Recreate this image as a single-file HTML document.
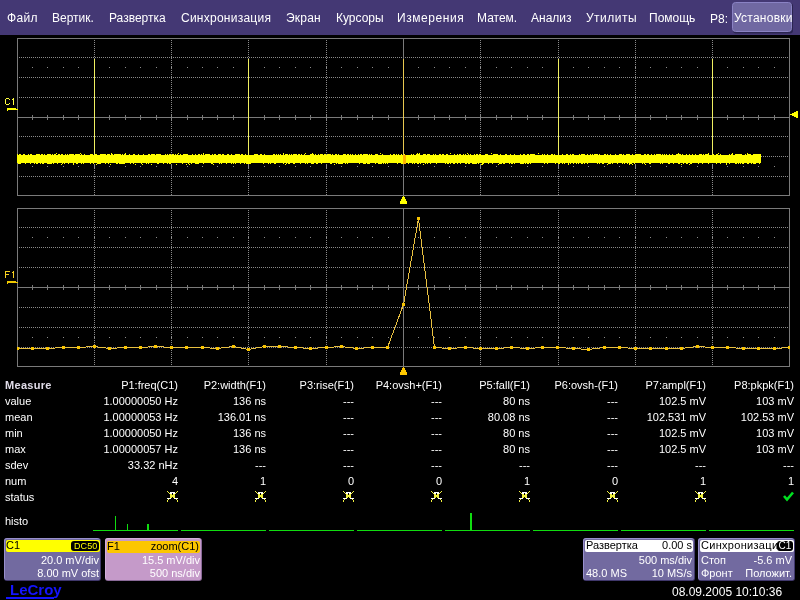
<!DOCTYPE html>
<html><head><meta charset="utf-8"><style>
html,body{margin:0;padding:0;background:#000;width:800px;height:600px;overflow:hidden}
svg{display:block;font-family:"Liberation Sans", sans-serif;will-change:transform}
</style></head><body>
<svg width="800" height="600" viewBox="0 0 800 600" shape-rendering="crispEdges">
<rect x="0" y="0" width="800" height="600" fill="#000"/>
<rect x="0" y="0" width="800" height="35" fill="#443874"/>
<text x="7" y="22" fill="#ffffff" font-size="12" text-anchor="start" font-weight="normal" letter-spacing="0.3">Файл</text>
<text x="52" y="22" fill="#ffffff" font-size="12" text-anchor="start" font-weight="normal">Вертик.</text>
<text x="109" y="22" fill="#ffffff" font-size="12" text-anchor="start" font-weight="normal">Развертка</text>
<text x="181" y="22" fill="#ffffff" font-size="12" text-anchor="start" font-weight="normal" letter-spacing="0.25">Синхронизация</text>
<text x="286" y="22" fill="#ffffff" font-size="12" text-anchor="start" font-weight="normal" letter-spacing="0.2">Экран</text>
<text x="336" y="22" fill="#ffffff" font-size="12" text-anchor="start" font-weight="normal">Курсоры</text>
<text x="397" y="22" fill="#ffffff" font-size="12" text-anchor="start" font-weight="normal" letter-spacing="0.55">Измерения</text>
<text x="477" y="22" fill="#ffffff" font-size="12" text-anchor="start" font-weight="normal">Матем.</text>
<text x="531" y="22" fill="#ffffff" font-size="12" text-anchor="start" font-weight="normal">Анализ</text>
<text x="586" y="22" fill="#ffffff" font-size="12" text-anchor="start" font-weight="normal" letter-spacing="0.5">Утилиты</text>
<text x="649" y="22" fill="#ffffff" font-size="12" text-anchor="start" font-weight="normal">Помощь</text>
<text x="710" y="23" fill="#ffffff" font-size="12" text-anchor="start" font-weight="normal">P8:</text>
<rect x="733" y="3" width="60" height="30.5" rx="3" fill="#2a2450" shape-rendering="auto"/>
<rect x="732.5" y="2.5" width="59" height="29" rx="3" fill="#7068a2" stroke="#8a82c4" stroke-width="1" shape-rendering="auto"/>
<text x="734" y="22" fill="#ffffff" font-size="12" text-anchor="start" font-weight="normal" letter-spacing="0.25">Установки</text>
<rect x="17" y="38" width="773" height="1" fill="#7a7a7a"/>
<rect x="17" y="195" width="773" height="1" fill="#7a7a7a"/>
<rect x="17" y="38" width="1" height="158" fill="#7a7a7a"/>
<rect x="789" y="38" width="1" height="158" fill="#7a7a7a"/>
<path d="M19 57.5H788" stroke="#8a8a8a" stroke-dasharray="1 1" />
<path d="M19 77.5H788" stroke="#8a8a8a" stroke-dasharray="1 1" />
<path d="M19 97.5H788" stroke="#8a8a8a" stroke-dasharray="1 1" />
<path d="M19 136.5H788" stroke="#8a8a8a" stroke-dasharray="1 1" />
<path d="M19 156.5H788" stroke="#8a8a8a" stroke-dasharray="1 1" />
<path d="M19 176.5H788" stroke="#8a8a8a" stroke-dasharray="1 1" />
<rect x="17" y="117" width="773" height="1" fill="#7a7a7a"/>
<rect x="94" y="115" width="1" height="5" fill="#7a7a7a"/>
<rect x="171" y="115" width="1" height="5" fill="#7a7a7a"/>
<rect x="248" y="115" width="1" height="5" fill="#7a7a7a"/>
<rect x="326" y="115" width="1" height="5" fill="#7a7a7a"/>
<rect x="403" y="115" width="1" height="5" fill="#7a7a7a"/>
<rect x="480" y="115" width="1" height="5" fill="#7a7a7a"/>
<rect x="558" y="115" width="1" height="5" fill="#7a7a7a"/>
<rect x="635" y="115" width="1" height="5" fill="#7a7a7a"/>
<rect x="712" y="115" width="1" height="5" fill="#7a7a7a"/>
<rect x="32" y="115" width="1" height="5" fill="#7a7a7a"/>
<rect x="47" y="115" width="1" height="5" fill="#7a7a7a"/>
<rect x="63" y="115" width="1" height="5" fill="#7a7a7a"/>
<rect x="78" y="115" width="1" height="5" fill="#7a7a7a"/>
<rect x="109" y="115" width="1" height="5" fill="#7a7a7a"/>
<rect x="125" y="115" width="1" height="5" fill="#7a7a7a"/>
<rect x="140" y="115" width="1" height="5" fill="#7a7a7a"/>
<rect x="156" y="115" width="1" height="5" fill="#7a7a7a"/>
<rect x="187" y="115" width="1" height="5" fill="#7a7a7a"/>
<rect x="202" y="115" width="1" height="5" fill="#7a7a7a"/>
<rect x="217" y="115" width="1" height="5" fill="#7a7a7a"/>
<rect x="233" y="115" width="1" height="5" fill="#7a7a7a"/>
<rect x="264" y="115" width="1" height="5" fill="#7a7a7a"/>
<rect x="279" y="115" width="1" height="5" fill="#7a7a7a"/>
<rect x="295" y="115" width="1" height="5" fill="#7a7a7a"/>
<rect x="310" y="115" width="1" height="5" fill="#7a7a7a"/>
<rect x="341" y="115" width="1" height="5" fill="#7a7a7a"/>
<rect x="357" y="115" width="1" height="5" fill="#7a7a7a"/>
<rect x="372" y="115" width="1" height="5" fill="#7a7a7a"/>
<rect x="388" y="115" width="1" height="5" fill="#7a7a7a"/>
<rect x="418" y="115" width="1" height="5" fill="#7a7a7a"/>
<rect x="434" y="115" width="1" height="5" fill="#7a7a7a"/>
<rect x="449" y="115" width="1" height="5" fill="#7a7a7a"/>
<rect x="465" y="115" width="1" height="5" fill="#7a7a7a"/>
<rect x="496" y="115" width="1" height="5" fill="#7a7a7a"/>
<rect x="511" y="115" width="1" height="5" fill="#7a7a7a"/>
<rect x="527" y="115" width="1" height="5" fill="#7a7a7a"/>
<rect x="542" y="115" width="1" height="5" fill="#7a7a7a"/>
<rect x="573" y="115" width="1" height="5" fill="#7a7a7a"/>
<rect x="588" y="115" width="1" height="5" fill="#7a7a7a"/>
<rect x="604" y="115" width="1" height="5" fill="#7a7a7a"/>
<rect x="619" y="115" width="1" height="5" fill="#7a7a7a"/>
<rect x="650" y="115" width="1" height="5" fill="#7a7a7a"/>
<rect x="666" y="115" width="1" height="5" fill="#7a7a7a"/>
<rect x="681" y="115" width="1" height="5" fill="#7a7a7a"/>
<rect x="697" y="115" width="1" height="5" fill="#7a7a7a"/>
<rect x="727" y="115" width="1" height="5" fill="#7a7a7a"/>
<rect x="743" y="115" width="1" height="5" fill="#7a7a7a"/>
<rect x="758" y="115" width="1" height="5" fill="#7a7a7a"/>
<rect x="774" y="115" width="1" height="5" fill="#7a7a7a"/>
<path d="M94.5 40V195" stroke="#8a8a8a" stroke-dasharray="1 1" />
<path d="M171.5 40V195" stroke="#8a8a8a" stroke-dasharray="1 1" />
<path d="M248.5 40V195" stroke="#8a8a8a" stroke-dasharray="1 1" />
<path d="M326.5 40V195" stroke="#8a8a8a" stroke-dasharray="1 1" />
<path d="M480.5 40V195" stroke="#8a8a8a" stroke-dasharray="1 1" />
<path d="M558.5 40V195" stroke="#8a8a8a" stroke-dasharray="1 1" />
<path d="M635.5 40V195" stroke="#8a8a8a" stroke-dasharray="1 1" />
<path d="M712.5 40V195" stroke="#8a8a8a" stroke-dasharray="1 1" />
<rect x="403" y="38" width="1" height="158" fill="#7a7a7a"/>
<rect x="32" y="67" width="1" height="1" fill="#8a8a8a"/>
<rect x="47" y="67" width="1" height="1" fill="#8a8a8a"/>
<rect x="63" y="67" width="1" height="1" fill="#8a8a8a"/>
<rect x="78" y="67" width="1" height="1" fill="#8a8a8a"/>
<rect x="109" y="67" width="1" height="1" fill="#8a8a8a"/>
<rect x="125" y="67" width="1" height="1" fill="#8a8a8a"/>
<rect x="140" y="67" width="1" height="1" fill="#8a8a8a"/>
<rect x="156" y="67" width="1" height="1" fill="#8a8a8a"/>
<rect x="187" y="67" width="1" height="1" fill="#8a8a8a"/>
<rect x="202" y="67" width="1" height="1" fill="#8a8a8a"/>
<rect x="217" y="67" width="1" height="1" fill="#8a8a8a"/>
<rect x="233" y="67" width="1" height="1" fill="#8a8a8a"/>
<rect x="264" y="67" width="1" height="1" fill="#8a8a8a"/>
<rect x="279" y="67" width="1" height="1" fill="#8a8a8a"/>
<rect x="295" y="67" width="1" height="1" fill="#8a8a8a"/>
<rect x="310" y="67" width="1" height="1" fill="#8a8a8a"/>
<rect x="341" y="67" width="1" height="1" fill="#8a8a8a"/>
<rect x="357" y="67" width="1" height="1" fill="#8a8a8a"/>
<rect x="372" y="67" width="1" height="1" fill="#8a8a8a"/>
<rect x="388" y="67" width="1" height="1" fill="#8a8a8a"/>
<rect x="418" y="67" width="1" height="1" fill="#8a8a8a"/>
<rect x="434" y="67" width="1" height="1" fill="#8a8a8a"/>
<rect x="449" y="67" width="1" height="1" fill="#8a8a8a"/>
<rect x="465" y="67" width="1" height="1" fill="#8a8a8a"/>
<rect x="496" y="67" width="1" height="1" fill="#8a8a8a"/>
<rect x="511" y="67" width="1" height="1" fill="#8a8a8a"/>
<rect x="527" y="67" width="1" height="1" fill="#8a8a8a"/>
<rect x="542" y="67" width="1" height="1" fill="#8a8a8a"/>
<rect x="573" y="67" width="1" height="1" fill="#8a8a8a"/>
<rect x="588" y="67" width="1" height="1" fill="#8a8a8a"/>
<rect x="604" y="67" width="1" height="1" fill="#8a8a8a"/>
<rect x="619" y="67" width="1" height="1" fill="#8a8a8a"/>
<rect x="650" y="67" width="1" height="1" fill="#8a8a8a"/>
<rect x="666" y="67" width="1" height="1" fill="#8a8a8a"/>
<rect x="681" y="67" width="1" height="1" fill="#8a8a8a"/>
<rect x="697" y="67" width="1" height="1" fill="#8a8a8a"/>
<rect x="727" y="67" width="1" height="1" fill="#8a8a8a"/>
<rect x="743" y="67" width="1" height="1" fill="#8a8a8a"/>
<rect x="758" y="67" width="1" height="1" fill="#8a8a8a"/>
<rect x="774" y="67" width="1" height="1" fill="#8a8a8a"/>
<rect x="94" y="66" width="1" height="3" fill="#8a8a8a"/>
<rect x="171" y="66" width="1" height="3" fill="#8a8a8a"/>
<rect x="248" y="66" width="1" height="3" fill="#8a8a8a"/>
<rect x="326" y="66" width="1" height="3" fill="#8a8a8a"/>
<rect x="480" y="66" width="1" height="3" fill="#8a8a8a"/>
<rect x="558" y="66" width="1" height="3" fill="#8a8a8a"/>
<rect x="635" y="66" width="1" height="3" fill="#8a8a8a"/>
<rect x="712" y="66" width="1" height="3" fill="#8a8a8a"/>
<rect x="32" y="166" width="1" height="1" fill="#8a8a8a"/>
<rect x="47" y="166" width="1" height="1" fill="#8a8a8a"/>
<rect x="63" y="166" width="1" height="1" fill="#8a8a8a"/>
<rect x="78" y="166" width="1" height="1" fill="#8a8a8a"/>
<rect x="109" y="166" width="1" height="1" fill="#8a8a8a"/>
<rect x="125" y="166" width="1" height="1" fill="#8a8a8a"/>
<rect x="140" y="166" width="1" height="1" fill="#8a8a8a"/>
<rect x="156" y="166" width="1" height="1" fill="#8a8a8a"/>
<rect x="187" y="166" width="1" height="1" fill="#8a8a8a"/>
<rect x="202" y="166" width="1" height="1" fill="#8a8a8a"/>
<rect x="217" y="166" width="1" height="1" fill="#8a8a8a"/>
<rect x="233" y="166" width="1" height="1" fill="#8a8a8a"/>
<rect x="264" y="166" width="1" height="1" fill="#8a8a8a"/>
<rect x="279" y="166" width="1" height="1" fill="#8a8a8a"/>
<rect x="295" y="166" width="1" height="1" fill="#8a8a8a"/>
<rect x="310" y="166" width="1" height="1" fill="#8a8a8a"/>
<rect x="341" y="166" width="1" height="1" fill="#8a8a8a"/>
<rect x="357" y="166" width="1" height="1" fill="#8a8a8a"/>
<rect x="372" y="166" width="1" height="1" fill="#8a8a8a"/>
<rect x="388" y="166" width="1" height="1" fill="#8a8a8a"/>
<rect x="418" y="166" width="1" height="1" fill="#8a8a8a"/>
<rect x="434" y="166" width="1" height="1" fill="#8a8a8a"/>
<rect x="449" y="166" width="1" height="1" fill="#8a8a8a"/>
<rect x="465" y="166" width="1" height="1" fill="#8a8a8a"/>
<rect x="496" y="166" width="1" height="1" fill="#8a8a8a"/>
<rect x="511" y="166" width="1" height="1" fill="#8a8a8a"/>
<rect x="527" y="166" width="1" height="1" fill="#8a8a8a"/>
<rect x="542" y="166" width="1" height="1" fill="#8a8a8a"/>
<rect x="573" y="166" width="1" height="1" fill="#8a8a8a"/>
<rect x="588" y="166" width="1" height="1" fill="#8a8a8a"/>
<rect x="604" y="166" width="1" height="1" fill="#8a8a8a"/>
<rect x="619" y="166" width="1" height="1" fill="#8a8a8a"/>
<rect x="650" y="166" width="1" height="1" fill="#8a8a8a"/>
<rect x="666" y="166" width="1" height="1" fill="#8a8a8a"/>
<rect x="681" y="166" width="1" height="1" fill="#8a8a8a"/>
<rect x="697" y="166" width="1" height="1" fill="#8a8a8a"/>
<rect x="727" y="166" width="1" height="1" fill="#8a8a8a"/>
<rect x="743" y="166" width="1" height="1" fill="#8a8a8a"/>
<rect x="758" y="166" width="1" height="1" fill="#8a8a8a"/>
<rect x="774" y="166" width="1" height="1" fill="#8a8a8a"/>
<rect x="94" y="165" width="1" height="3" fill="#8a8a8a"/>
<rect x="171" y="165" width="1" height="3" fill="#8a8a8a"/>
<rect x="248" y="165" width="1" height="3" fill="#8a8a8a"/>
<rect x="326" y="165" width="1" height="3" fill="#8a8a8a"/>
<rect x="480" y="165" width="1" height="3" fill="#8a8a8a"/>
<rect x="558" y="165" width="1" height="3" fill="#8a8a8a"/>
<rect x="635" y="165" width="1" height="3" fill="#8a8a8a"/>
<rect x="712" y="165" width="1" height="3" fill="#8a8a8a"/>
<rect x="17" y="208" width="773" height="1" fill="#7a7a7a"/>
<rect x="17" y="366" width="773" height="1" fill="#7a7a7a"/>
<rect x="17" y="208" width="1" height="159" fill="#7a7a7a"/>
<rect x="789" y="208" width="1" height="159" fill="#7a7a7a"/>
<path d="M19 227.5H788" stroke="#8a8a8a" stroke-dasharray="1 1" />
<path d="M19 247.5H788" stroke="#8a8a8a" stroke-dasharray="1 1" />
<path d="M19 267.5H788" stroke="#8a8a8a" stroke-dasharray="1 1" />
<path d="M19 307.5H788" stroke="#8a8a8a" stroke-dasharray="1 1" />
<path d="M19 327.5H788" stroke="#8a8a8a" stroke-dasharray="1 1" />
<path d="M19 347.5H788" stroke="#8a8a8a" stroke-dasharray="1 1" />
<rect x="17" y="287" width="773" height="1" fill="#7a7a7a"/>
<rect x="94" y="285" width="1" height="5" fill="#7a7a7a"/>
<rect x="171" y="285" width="1" height="5" fill="#7a7a7a"/>
<rect x="248" y="285" width="1" height="5" fill="#7a7a7a"/>
<rect x="326" y="285" width="1" height="5" fill="#7a7a7a"/>
<rect x="403" y="285" width="1" height="5" fill="#7a7a7a"/>
<rect x="480" y="285" width="1" height="5" fill="#7a7a7a"/>
<rect x="558" y="285" width="1" height="5" fill="#7a7a7a"/>
<rect x="635" y="285" width="1" height="5" fill="#7a7a7a"/>
<rect x="712" y="285" width="1" height="5" fill="#7a7a7a"/>
<rect x="32" y="285" width="1" height="5" fill="#7a7a7a"/>
<rect x="47" y="285" width="1" height="5" fill="#7a7a7a"/>
<rect x="63" y="285" width="1" height="5" fill="#7a7a7a"/>
<rect x="78" y="285" width="1" height="5" fill="#7a7a7a"/>
<rect x="109" y="285" width="1" height="5" fill="#7a7a7a"/>
<rect x="125" y="285" width="1" height="5" fill="#7a7a7a"/>
<rect x="140" y="285" width="1" height="5" fill="#7a7a7a"/>
<rect x="156" y="285" width="1" height="5" fill="#7a7a7a"/>
<rect x="187" y="285" width="1" height="5" fill="#7a7a7a"/>
<rect x="202" y="285" width="1" height="5" fill="#7a7a7a"/>
<rect x="217" y="285" width="1" height="5" fill="#7a7a7a"/>
<rect x="233" y="285" width="1" height="5" fill="#7a7a7a"/>
<rect x="264" y="285" width="1" height="5" fill="#7a7a7a"/>
<rect x="279" y="285" width="1" height="5" fill="#7a7a7a"/>
<rect x="295" y="285" width="1" height="5" fill="#7a7a7a"/>
<rect x="310" y="285" width="1" height="5" fill="#7a7a7a"/>
<rect x="341" y="285" width="1" height="5" fill="#7a7a7a"/>
<rect x="357" y="285" width="1" height="5" fill="#7a7a7a"/>
<rect x="372" y="285" width="1" height="5" fill="#7a7a7a"/>
<rect x="388" y="285" width="1" height="5" fill="#7a7a7a"/>
<rect x="418" y="285" width="1" height="5" fill="#7a7a7a"/>
<rect x="434" y="285" width="1" height="5" fill="#7a7a7a"/>
<rect x="449" y="285" width="1" height="5" fill="#7a7a7a"/>
<rect x="465" y="285" width="1" height="5" fill="#7a7a7a"/>
<rect x="496" y="285" width="1" height="5" fill="#7a7a7a"/>
<rect x="511" y="285" width="1" height="5" fill="#7a7a7a"/>
<rect x="527" y="285" width="1" height="5" fill="#7a7a7a"/>
<rect x="542" y="285" width="1" height="5" fill="#7a7a7a"/>
<rect x="573" y="285" width="1" height="5" fill="#7a7a7a"/>
<rect x="588" y="285" width="1" height="5" fill="#7a7a7a"/>
<rect x="604" y="285" width="1" height="5" fill="#7a7a7a"/>
<rect x="619" y="285" width="1" height="5" fill="#7a7a7a"/>
<rect x="650" y="285" width="1" height="5" fill="#7a7a7a"/>
<rect x="666" y="285" width="1" height="5" fill="#7a7a7a"/>
<rect x="681" y="285" width="1" height="5" fill="#7a7a7a"/>
<rect x="697" y="285" width="1" height="5" fill="#7a7a7a"/>
<rect x="727" y="285" width="1" height="5" fill="#7a7a7a"/>
<rect x="743" y="285" width="1" height="5" fill="#7a7a7a"/>
<rect x="758" y="285" width="1" height="5" fill="#7a7a7a"/>
<rect x="774" y="285" width="1" height="5" fill="#7a7a7a"/>
<path d="M94.5 210V366" stroke="#8a8a8a" stroke-dasharray="1 1" />
<path d="M171.5 210V366" stroke="#8a8a8a" stroke-dasharray="1 1" />
<path d="M248.5 210V366" stroke="#8a8a8a" stroke-dasharray="1 1" />
<path d="M326.5 210V366" stroke="#8a8a8a" stroke-dasharray="1 1" />
<path d="M480.5 210V366" stroke="#8a8a8a" stroke-dasharray="1 1" />
<path d="M558.5 210V366" stroke="#8a8a8a" stroke-dasharray="1 1" />
<path d="M635.5 210V366" stroke="#8a8a8a" stroke-dasharray="1 1" />
<path d="M712.5 210V366" stroke="#8a8a8a" stroke-dasharray="1 1" />
<rect x="403" y="208" width="1" height="159" fill="#7a7a7a"/>
<rect x="32" y="237" width="1" height="1" fill="#8a8a8a"/>
<rect x="47" y="237" width="1" height="1" fill="#8a8a8a"/>
<rect x="63" y="237" width="1" height="1" fill="#8a8a8a"/>
<rect x="78" y="237" width="1" height="1" fill="#8a8a8a"/>
<rect x="109" y="237" width="1" height="1" fill="#8a8a8a"/>
<rect x="125" y="237" width="1" height="1" fill="#8a8a8a"/>
<rect x="140" y="237" width="1" height="1" fill="#8a8a8a"/>
<rect x="156" y="237" width="1" height="1" fill="#8a8a8a"/>
<rect x="187" y="237" width="1" height="1" fill="#8a8a8a"/>
<rect x="202" y="237" width="1" height="1" fill="#8a8a8a"/>
<rect x="217" y="237" width="1" height="1" fill="#8a8a8a"/>
<rect x="233" y="237" width="1" height="1" fill="#8a8a8a"/>
<rect x="264" y="237" width="1" height="1" fill="#8a8a8a"/>
<rect x="279" y="237" width="1" height="1" fill="#8a8a8a"/>
<rect x="295" y="237" width="1" height="1" fill="#8a8a8a"/>
<rect x="310" y="237" width="1" height="1" fill="#8a8a8a"/>
<rect x="341" y="237" width="1" height="1" fill="#8a8a8a"/>
<rect x="357" y="237" width="1" height="1" fill="#8a8a8a"/>
<rect x="372" y="237" width="1" height="1" fill="#8a8a8a"/>
<rect x="388" y="237" width="1" height="1" fill="#8a8a8a"/>
<rect x="418" y="237" width="1" height="1" fill="#8a8a8a"/>
<rect x="434" y="237" width="1" height="1" fill="#8a8a8a"/>
<rect x="449" y="237" width="1" height="1" fill="#8a8a8a"/>
<rect x="465" y="237" width="1" height="1" fill="#8a8a8a"/>
<rect x="496" y="237" width="1" height="1" fill="#8a8a8a"/>
<rect x="511" y="237" width="1" height="1" fill="#8a8a8a"/>
<rect x="527" y="237" width="1" height="1" fill="#8a8a8a"/>
<rect x="542" y="237" width="1" height="1" fill="#8a8a8a"/>
<rect x="573" y="237" width="1" height="1" fill="#8a8a8a"/>
<rect x="588" y="237" width="1" height="1" fill="#8a8a8a"/>
<rect x="604" y="237" width="1" height="1" fill="#8a8a8a"/>
<rect x="619" y="237" width="1" height="1" fill="#8a8a8a"/>
<rect x="650" y="237" width="1" height="1" fill="#8a8a8a"/>
<rect x="666" y="237" width="1" height="1" fill="#8a8a8a"/>
<rect x="681" y="237" width="1" height="1" fill="#8a8a8a"/>
<rect x="697" y="237" width="1" height="1" fill="#8a8a8a"/>
<rect x="727" y="237" width="1" height="1" fill="#8a8a8a"/>
<rect x="743" y="237" width="1" height="1" fill="#8a8a8a"/>
<rect x="758" y="237" width="1" height="1" fill="#8a8a8a"/>
<rect x="774" y="237" width="1" height="1" fill="#8a8a8a"/>
<rect x="94" y="236" width="1" height="3" fill="#8a8a8a"/>
<rect x="171" y="236" width="1" height="3" fill="#8a8a8a"/>
<rect x="248" y="236" width="1" height="3" fill="#8a8a8a"/>
<rect x="326" y="236" width="1" height="3" fill="#8a8a8a"/>
<rect x="480" y="236" width="1" height="3" fill="#8a8a8a"/>
<rect x="558" y="236" width="1" height="3" fill="#8a8a8a"/>
<rect x="635" y="236" width="1" height="3" fill="#8a8a8a"/>
<rect x="712" y="236" width="1" height="3" fill="#8a8a8a"/>
<rect x="32" y="337" width="1" height="1" fill="#8a8a8a"/>
<rect x="47" y="337" width="1" height="1" fill="#8a8a8a"/>
<rect x="63" y="337" width="1" height="1" fill="#8a8a8a"/>
<rect x="78" y="337" width="1" height="1" fill="#8a8a8a"/>
<rect x="109" y="337" width="1" height="1" fill="#8a8a8a"/>
<rect x="125" y="337" width="1" height="1" fill="#8a8a8a"/>
<rect x="140" y="337" width="1" height="1" fill="#8a8a8a"/>
<rect x="156" y="337" width="1" height="1" fill="#8a8a8a"/>
<rect x="187" y="337" width="1" height="1" fill="#8a8a8a"/>
<rect x="202" y="337" width="1" height="1" fill="#8a8a8a"/>
<rect x="217" y="337" width="1" height="1" fill="#8a8a8a"/>
<rect x="233" y="337" width="1" height="1" fill="#8a8a8a"/>
<rect x="264" y="337" width="1" height="1" fill="#8a8a8a"/>
<rect x="279" y="337" width="1" height="1" fill="#8a8a8a"/>
<rect x="295" y="337" width="1" height="1" fill="#8a8a8a"/>
<rect x="310" y="337" width="1" height="1" fill="#8a8a8a"/>
<rect x="341" y="337" width="1" height="1" fill="#8a8a8a"/>
<rect x="357" y="337" width="1" height="1" fill="#8a8a8a"/>
<rect x="372" y="337" width="1" height="1" fill="#8a8a8a"/>
<rect x="388" y="337" width="1" height="1" fill="#8a8a8a"/>
<rect x="418" y="337" width="1" height="1" fill="#8a8a8a"/>
<rect x="434" y="337" width="1" height="1" fill="#8a8a8a"/>
<rect x="449" y="337" width="1" height="1" fill="#8a8a8a"/>
<rect x="465" y="337" width="1" height="1" fill="#8a8a8a"/>
<rect x="496" y="337" width="1" height="1" fill="#8a8a8a"/>
<rect x="511" y="337" width="1" height="1" fill="#8a8a8a"/>
<rect x="527" y="337" width="1" height="1" fill="#8a8a8a"/>
<rect x="542" y="337" width="1" height="1" fill="#8a8a8a"/>
<rect x="573" y="337" width="1" height="1" fill="#8a8a8a"/>
<rect x="588" y="337" width="1" height="1" fill="#8a8a8a"/>
<rect x="604" y="337" width="1" height="1" fill="#8a8a8a"/>
<rect x="619" y="337" width="1" height="1" fill="#8a8a8a"/>
<rect x="650" y="337" width="1" height="1" fill="#8a8a8a"/>
<rect x="666" y="337" width="1" height="1" fill="#8a8a8a"/>
<rect x="681" y="337" width="1" height="1" fill="#8a8a8a"/>
<rect x="697" y="337" width="1" height="1" fill="#8a8a8a"/>
<rect x="727" y="337" width="1" height="1" fill="#8a8a8a"/>
<rect x="743" y="337" width="1" height="1" fill="#8a8a8a"/>
<rect x="758" y="337" width="1" height="1" fill="#8a8a8a"/>
<rect x="774" y="337" width="1" height="1" fill="#8a8a8a"/>
<rect x="94" y="336" width="1" height="3" fill="#8a8a8a"/>
<rect x="171" y="336" width="1" height="3" fill="#8a8a8a"/>
<rect x="248" y="336" width="1" height="3" fill="#8a8a8a"/>
<rect x="326" y="336" width="1" height="3" fill="#8a8a8a"/>
<rect x="480" y="336" width="1" height="3" fill="#8a8a8a"/>
<rect x="558" y="336" width="1" height="3" fill="#8a8a8a"/>
<rect x="635" y="336" width="1" height="3" fill="#8a8a8a"/>
<rect x="712" y="336" width="1" height="3" fill="#8a8a8a"/>
<rect x="6" y="98" width="3" height="1" fill="#ffff40"/>
<rect x="5" y="99" width="1" height="5" fill="#ffff40"/>
<rect x="6" y="104" width="3" height="1" fill="#ffff40"/>
<rect x="9" y="99" width="1" height="1" fill="#ffff40"/>
<rect x="9" y="103" width="1" height="1" fill="#ffff40"/>
<rect x="13" y="98" width="1" height="7" fill="#ffff40"/>
<rect x="12" y="99" width="1" height="1" fill="#ffff40"/>
<rect x="7" y="108" width="9" height="1" fill="#ffff00"/>
<rect x="7" y="109" width="11" height="1" fill="#ffff00"/>
<rect x="7" y="110" width="1" height="1" fill="#ffff00"/>
<rect x="5" y="271" width="1" height="7" fill="#f8d020"/>
<rect x="6" y="271" width="4" height="1" fill="#f8d020"/>
<rect x="6" y="274" width="3" height="1" fill="#f8d020"/>
<rect x="13" y="271" width="1" height="7" fill="#f8d020"/>
<rect x="12" y="272" width="1" height="1" fill="#f8d020"/>
<rect x="7" y="281" width="9" height="1" fill="#f0c800"/>
<rect x="7" y="282" width="11" height="1" fill="#f0c800"/>
<rect x="7" y="283" width="1" height="1" fill="#f0c800"/>
<rect x="17" y="155" width="744" height="8" fill="#ffff00"/>
<rect x="17" y="154" width="1" height="1" fill="#ffff00"/>
<rect x="18" y="163" width="1" height="1" fill="#ffff00"/>
<rect x="19" y="154" width="1" height="1" fill="#ffff00"/>
<rect x="19" y="163" width="1" height="1" fill="#ffff00"/>
<rect x="20" y="154" width="1" height="1" fill="#ffff00"/>
<rect x="20" y="163" width="1" height="1" fill="#ffff00"/>
<rect x="23" y="154" width="1" height="1" fill="#ffff00"/>
<rect x="24" y="154" width="1" height="1" fill="#ffff00"/>
<rect x="25" y="163" width="1" height="1" fill="#ffff00"/>
<rect x="28" y="154" width="1" height="1" fill="#ffff00"/>
<rect x="30" y="154" width="1" height="1" fill="#ffff00"/>
<rect x="30" y="163" width="1" height="1" fill="#ffff00"/>
<rect x="31" y="154" width="1" height="1" fill="#ffff00"/>
<rect x="34" y="163" width="1" height="1" fill="#ffff00"/>
<rect x="36" y="154" width="1" height="1" fill="#ffff00"/>
<rect x="36" y="163" width="1" height="1" fill="#ffff00"/>
<rect x="37" y="154" width="1" height="1" fill="#ffff00"/>
<rect x="37" y="163" width="1" height="1" fill="#ffff00"/>
<rect x="38" y="154" width="1" height="1" fill="#ffff00"/>
<rect x="39" y="154" width="1" height="1" fill="#ffff00"/>
<rect x="40" y="163" width="1" height="1" fill="#ffff00"/>
<rect x="41" y="154" width="1" height="1" fill="#ffff00"/>
<rect x="42" y="154" width="1" height="1" fill="#ffff00"/>
<rect x="42" y="163" width="1" height="1" fill="#ffff00"/>
<rect x="43" y="163" width="1" height="1" fill="#ffff00"/>
<rect x="44" y="154" width="1" height="1" fill="#ffff00"/>
<rect x="47" y="154" width="1" height="1" fill="#ffff00"/>
<rect x="47" y="163" width="1" height="1" fill="#ffff00"/>
<rect x="48" y="154" width="1" height="1" fill="#ffff00"/>
<rect x="48" y="163" width="1" height="1" fill="#ffff00"/>
<rect x="49" y="154" width="1" height="1" fill="#ffff00"/>
<rect x="49" y="163" width="1" height="1" fill="#ffff00"/>
<rect x="50" y="154" width="1" height="1" fill="#ffff00"/>
<rect x="50" y="163" width="1" height="1" fill="#ffff00"/>
<rect x="51" y="163" width="1" height="1" fill="#ffff00"/>
<rect x="52" y="154" width="1" height="1" fill="#ffff00"/>
<rect x="53" y="163" width="1" height="1" fill="#ffff00"/>
<rect x="54" y="154" width="1" height="1" fill="#ffff00"/>
<rect x="55" y="154" width="1" height="1" fill="#ffff00"/>
<rect x="56" y="153" width="1" height="1" fill="#ffff00"/>
<rect x="57" y="163" width="1" height="1" fill="#ffff00"/>
<rect x="58" y="154" width="1" height="1" fill="#ffff00"/>
<rect x="59" y="154" width="1" height="1" fill="#ffff00"/>
<rect x="61" y="154" width="1" height="1" fill="#ffff00"/>
<rect x="61" y="164" width="1" height="1" fill="#ffff00"/>
<rect x="62" y="154" width="1" height="1" fill="#ffff00"/>
<rect x="62" y="163" width="1" height="1" fill="#ffff00"/>
<rect x="64" y="163" width="1" height="1" fill="#ffff00"/>
<rect x="65" y="154" width="1" height="1" fill="#ffff00"/>
<rect x="67" y="154" width="1" height="1" fill="#ffff00"/>
<rect x="68" y="163" width="1" height="1" fill="#ffff00"/>
<rect x="69" y="154" width="1" height="1" fill="#ffff00"/>
<rect x="70" y="154" width="1" height="1" fill="#ffff00"/>
<rect x="71" y="154" width="1" height="1" fill="#ffff00"/>
<rect x="72" y="154" width="1" height="1" fill="#ffff00"/>
<rect x="73" y="154" width="1" height="1" fill="#ffff00"/>
<rect x="73" y="163" width="1" height="1" fill="#ffff00"/>
<rect x="73" y="164" width="1" height="1" fill="#ffff00"/>
<rect x="75" y="154" width="1" height="1" fill="#ffff00"/>
<rect x="76" y="154" width="1" height="1" fill="#ffff00"/>
<rect x="76" y="163" width="1" height="1" fill="#ffff00"/>
<rect x="77" y="154" width="1" height="1" fill="#ffff00"/>
<rect x="77" y="163" width="1" height="1" fill="#ffff00"/>
<rect x="78" y="154" width="1" height="1" fill="#ffff00"/>
<rect x="79" y="154" width="1" height="1" fill="#ffff00"/>
<rect x="80" y="153" width="1" height="1" fill="#ffff00"/>
<rect x="81" y="154" width="1" height="1" fill="#ffff00"/>
<rect x="81" y="163" width="1" height="1" fill="#ffff00"/>
<rect x="83" y="163" width="1" height="1" fill="#ffff00"/>
<rect x="84" y="154" width="1" height="1" fill="#ffff00"/>
<rect x="90" y="154" width="1" height="1" fill="#ffff00"/>
<rect x="90" y="163" width="1" height="1" fill="#ffff00"/>
<rect x="91" y="154" width="1" height="1" fill="#ffff00"/>
<rect x="92" y="154" width="1" height="1" fill="#ffff00"/>
<rect x="93" y="163" width="1" height="1" fill="#ffff00"/>
<rect x="94" y="154" width="1" height="1" fill="#ffff00"/>
<rect x="95" y="154" width="1" height="1" fill="#ffff00"/>
<rect x="96" y="154" width="1" height="1" fill="#ffff00"/>
<rect x="96" y="164" width="1" height="1" fill="#ffff00"/>
<rect x="97" y="163" width="1" height="1" fill="#ffff00"/>
<rect x="98" y="163" width="1" height="1" fill="#ffff00"/>
<rect x="99" y="163" width="1" height="1" fill="#ffff00"/>
<rect x="100" y="154" width="1" height="1" fill="#ffff00"/>
<rect x="100" y="163" width="1" height="1" fill="#ffff00"/>
<rect x="101" y="154" width="1" height="1" fill="#ffff00"/>
<rect x="102" y="154" width="1" height="1" fill="#ffff00"/>
<rect x="103" y="154" width="1" height="1" fill="#ffff00"/>
<rect x="104" y="154" width="1" height="1" fill="#ffff00"/>
<rect x="105" y="154" width="1" height="1" fill="#ffff00"/>
<rect x="105" y="163" width="1" height="1" fill="#ffff00"/>
<rect x="107" y="154" width="1" height="1" fill="#ffff00"/>
<rect x="108" y="154" width="1" height="1" fill="#ffff00"/>
<rect x="108" y="163" width="1" height="1" fill="#ffff00"/>
<rect x="109" y="154" width="1" height="1" fill="#ffff00"/>
<rect x="110" y="164" width="1" height="1" fill="#ffff00"/>
<rect x="111" y="154" width="1" height="1" fill="#ffff00"/>
<rect x="111" y="153" width="1" height="1" fill="#ffff00"/>
<rect x="112" y="154" width="1" height="1" fill="#ffff00"/>
<rect x="114" y="154" width="1" height="1" fill="#ffff00"/>
<rect x="115" y="154" width="1" height="1" fill="#ffff00"/>
<rect x="116" y="154" width="1" height="1" fill="#ffff00"/>
<rect x="116" y="163" width="1" height="1" fill="#ffff00"/>
<rect x="117" y="154" width="1" height="1" fill="#ffff00"/>
<rect x="117" y="163" width="1" height="1" fill="#ffff00"/>
<rect x="118" y="154" width="1" height="1" fill="#ffff00"/>
<rect x="119" y="154" width="1" height="1" fill="#ffff00"/>
<rect x="119" y="163" width="1" height="1" fill="#ffff00"/>
<rect x="120" y="154" width="1" height="1" fill="#ffff00"/>
<rect x="120" y="163" width="1" height="1" fill="#ffff00"/>
<rect x="121" y="163" width="1" height="1" fill="#ffff00"/>
<rect x="122" y="154" width="1" height="1" fill="#ffff00"/>
<rect x="122" y="163" width="1" height="1" fill="#ffff00"/>
<rect x="123" y="163" width="1" height="1" fill="#ffff00"/>
<rect x="124" y="154" width="1" height="1" fill="#ffff00"/>
<rect x="124" y="163" width="1" height="1" fill="#ffff00"/>
<rect x="125" y="154" width="1" height="1" fill="#ffff00"/>
<rect x="125" y="153" width="1" height="1" fill="#ffff00"/>
<rect x="129" y="154" width="1" height="1" fill="#ffff00"/>
<rect x="130" y="163" width="1" height="1" fill="#ffff00"/>
<rect x="133" y="154" width="1" height="1" fill="#ffff00"/>
<rect x="133" y="163" width="1" height="1" fill="#ffff00"/>
<rect x="134" y="154" width="1" height="1" fill="#ffff00"/>
<rect x="135" y="164" width="1" height="1" fill="#ffff00"/>
<rect x="138" y="154" width="1" height="1" fill="#ffff00"/>
<rect x="141" y="163" width="1" height="1" fill="#ffff00"/>
<rect x="142" y="164" width="1" height="1" fill="#ffff00"/>
<rect x="143" y="154" width="1" height="1" fill="#ffff00"/>
<rect x="146" y="163" width="1" height="1" fill="#ffff00"/>
<rect x="148" y="154" width="1" height="1" fill="#ffff00"/>
<rect x="148" y="163" width="1" height="1" fill="#ffff00"/>
<rect x="149" y="154" width="1" height="1" fill="#ffff00"/>
<rect x="151" y="154" width="1" height="1" fill="#ffff00"/>
<rect x="151" y="164" width="1" height="1" fill="#ffff00"/>
<rect x="152" y="154" width="1" height="1" fill="#ffff00"/>
<rect x="153" y="154" width="1" height="1" fill="#ffff00"/>
<rect x="154" y="154" width="1" height="1" fill="#ffff00"/>
<rect x="156" y="154" width="1" height="1" fill="#ffff00"/>
<rect x="157" y="154" width="1" height="1" fill="#ffff00"/>
<rect x="157" y="163" width="1" height="1" fill="#ffff00"/>
<rect x="158" y="154" width="1" height="1" fill="#ffff00"/>
<rect x="158" y="163" width="1" height="1" fill="#ffff00"/>
<rect x="159" y="154" width="1" height="1" fill="#ffff00"/>
<rect x="160" y="154" width="1" height="1" fill="#ffff00"/>
<rect x="163" y="163" width="1" height="1" fill="#ffff00"/>
<rect x="165" y="154" width="1" height="1" fill="#ffff00"/>
<rect x="167" y="154" width="1" height="1" fill="#ffff00"/>
<rect x="167" y="163" width="1" height="1" fill="#ffff00"/>
<rect x="169" y="154" width="1" height="1" fill="#ffff00"/>
<rect x="169" y="163" width="1" height="1" fill="#ffff00"/>
<rect x="170" y="154" width="1" height="1" fill="#ffff00"/>
<rect x="170" y="163" width="1" height="1" fill="#ffff00"/>
<rect x="172" y="154" width="1" height="1" fill="#ffff00"/>
<rect x="173" y="154" width="1" height="1" fill="#ffff00"/>
<rect x="175" y="154" width="1" height="1" fill="#ffff00"/>
<rect x="176" y="164" width="1" height="1" fill="#ffff00"/>
<rect x="177" y="154" width="1" height="1" fill="#ffff00"/>
<rect x="178" y="153" width="1" height="1" fill="#ffff00"/>
<rect x="180" y="154" width="1" height="1" fill="#ffff00"/>
<rect x="182" y="163" width="1" height="1" fill="#ffff00"/>
<rect x="183" y="154" width="1" height="1" fill="#ffff00"/>
<rect x="184" y="154" width="1" height="1" fill="#ffff00"/>
<rect x="185" y="154" width="1" height="1" fill="#ffff00"/>
<rect x="186" y="154" width="1" height="1" fill="#ffff00"/>
<rect x="186" y="164" width="1" height="1" fill="#ffff00"/>
<rect x="187" y="154" width="1" height="1" fill="#ffff00"/>
<rect x="188" y="163" width="1" height="1" fill="#ffff00"/>
<rect x="189" y="164" width="1" height="1" fill="#ffff00"/>
<rect x="191" y="163" width="1" height="1" fill="#ffff00"/>
<rect x="192" y="154" width="1" height="1" fill="#ffff00"/>
<rect x="195" y="154" width="1" height="1" fill="#ffff00"/>
<rect x="195" y="163" width="1" height="1" fill="#ffff00"/>
<rect x="196" y="163" width="1" height="1" fill="#ffff00"/>
<rect x="197" y="163" width="1" height="1" fill="#ffff00"/>
<rect x="198" y="154" width="1" height="1" fill="#ffff00"/>
<rect x="198" y="163" width="1" height="1" fill="#ffff00"/>
<rect x="199" y="154" width="1" height="1" fill="#ffff00"/>
<rect x="201" y="154" width="1" height="1" fill="#ffff00"/>
<rect x="203" y="154" width="1" height="1" fill="#ffff00"/>
<rect x="203" y="153" width="1" height="1" fill="#ffff00"/>
<rect x="203" y="163" width="1" height="1" fill="#ffff00"/>
<rect x="205" y="154" width="1" height="1" fill="#ffff00"/>
<rect x="206" y="154" width="1" height="1" fill="#ffff00"/>
<rect x="207" y="154" width="1" height="1" fill="#ffff00"/>
<rect x="208" y="154" width="1" height="1" fill="#ffff00"/>
<rect x="209" y="154" width="1" height="1" fill="#ffff00"/>
<rect x="211" y="163" width="1" height="1" fill="#ffff00"/>
<rect x="212" y="154" width="1" height="1" fill="#ffff00"/>
<rect x="212" y="163" width="1" height="1" fill="#ffff00"/>
<rect x="213" y="164" width="1" height="1" fill="#ffff00"/>
<rect x="214" y="154" width="1" height="1" fill="#ffff00"/>
<rect x="215" y="154" width="1" height="1" fill="#ffff00"/>
<rect x="218" y="154" width="1" height="1" fill="#ffff00"/>
<rect x="219" y="154" width="1" height="1" fill="#ffff00"/>
<rect x="219" y="163" width="1" height="1" fill="#ffff00"/>
<rect x="220" y="154" width="1" height="1" fill="#ffff00"/>
<rect x="221" y="163" width="1" height="1" fill="#ffff00"/>
<rect x="222" y="154" width="1" height="1" fill="#ffff00"/>
<rect x="223" y="154" width="1" height="1" fill="#ffff00"/>
<rect x="226" y="163" width="1" height="1" fill="#ffff00"/>
<rect x="227" y="154" width="1" height="1" fill="#ffff00"/>
<rect x="228" y="154" width="1" height="1" fill="#ffff00"/>
<rect x="231" y="154" width="1" height="1" fill="#ffff00"/>
<rect x="231" y="163" width="1" height="1" fill="#ffff00"/>
<rect x="233" y="163" width="1" height="1" fill="#ffff00"/>
<rect x="235" y="154" width="1" height="1" fill="#ffff00"/>
<rect x="235" y="163" width="1" height="1" fill="#ffff00"/>
<rect x="236" y="154" width="1" height="1" fill="#ffff00"/>
<rect x="237" y="154" width="1" height="1" fill="#ffff00"/>
<rect x="238" y="154" width="1" height="1" fill="#ffff00"/>
<rect x="239" y="154" width="1" height="1" fill="#ffff00"/>
<rect x="240" y="163" width="1" height="1" fill="#ffff00"/>
<rect x="241" y="154" width="1" height="1" fill="#ffff00"/>
<rect x="242" y="154" width="1" height="1" fill="#ffff00"/>
<rect x="244" y="163" width="1" height="1" fill="#ffff00"/>
<rect x="245" y="154" width="1" height="1" fill="#ffff00"/>
<rect x="246" y="163" width="1" height="1" fill="#ffff00"/>
<rect x="247" y="163" width="1" height="1" fill="#ffff00"/>
<rect x="248" y="154" width="1" height="1" fill="#ffff00"/>
<rect x="248" y="163" width="1" height="1" fill="#ffff00"/>
<rect x="249" y="163" width="1" height="1" fill="#ffff00"/>
<rect x="250" y="163" width="1" height="1" fill="#ffff00"/>
<rect x="254" y="154" width="1" height="1" fill="#ffff00"/>
<rect x="255" y="154" width="1" height="1" fill="#ffff00"/>
<rect x="256" y="154" width="1" height="1" fill="#ffff00"/>
<rect x="257" y="154" width="1" height="1" fill="#ffff00"/>
<rect x="260" y="154" width="1" height="1" fill="#ffff00"/>
<rect x="261" y="154" width="1" height="1" fill="#ffff00"/>
<rect x="263" y="163" width="1" height="1" fill="#ffff00"/>
<rect x="264" y="154" width="1" height="1" fill="#ffff00"/>
<rect x="268" y="163" width="1" height="1" fill="#ffff00"/>
<rect x="270" y="163" width="1" height="1" fill="#ffff00"/>
<rect x="273" y="154" width="1" height="1" fill="#ffff00"/>
<rect x="274" y="154" width="1" height="1" fill="#ffff00"/>
<rect x="274" y="163" width="1" height="1" fill="#ffff00"/>
<rect x="275" y="163" width="1" height="1" fill="#ffff00"/>
<rect x="276" y="154" width="1" height="1" fill="#ffff00"/>
<rect x="278" y="154" width="1" height="1" fill="#ffff00"/>
<rect x="280" y="154" width="1" height="1" fill="#ffff00"/>
<rect x="283" y="154" width="1" height="1" fill="#ffff00"/>
<rect x="283" y="153" width="1" height="1" fill="#ffff00"/>
<rect x="283" y="163" width="1" height="1" fill="#ffff00"/>
<rect x="285" y="154" width="1" height="1" fill="#ffff00"/>
<rect x="285" y="164" width="1" height="1" fill="#ffff00"/>
<rect x="286" y="154" width="1" height="1" fill="#ffff00"/>
<rect x="286" y="163" width="1" height="1" fill="#ffff00"/>
<rect x="287" y="154" width="1" height="1" fill="#ffff00"/>
<rect x="288" y="163" width="1" height="1" fill="#ffff00"/>
<rect x="289" y="154" width="1" height="1" fill="#ffff00"/>
<rect x="289" y="163" width="1" height="1" fill="#ffff00"/>
<rect x="291" y="154" width="1" height="1" fill="#ffff00"/>
<rect x="293" y="154" width="1" height="1" fill="#ffff00"/>
<rect x="293" y="163" width="1" height="1" fill="#ffff00"/>
<rect x="294" y="154" width="1" height="1" fill="#ffff00"/>
<rect x="294" y="163" width="1" height="1" fill="#ffff00"/>
<rect x="295" y="154" width="1" height="1" fill="#ffff00"/>
<rect x="296" y="154" width="1" height="1" fill="#ffff00"/>
<rect x="298" y="154" width="1" height="1" fill="#ffff00"/>
<rect x="299" y="154" width="1" height="1" fill="#ffff00"/>
<rect x="300" y="163" width="1" height="1" fill="#ffff00"/>
<rect x="301" y="154" width="1" height="1" fill="#ffff00"/>
<rect x="304" y="154" width="1" height="1" fill="#ffff00"/>
<rect x="305" y="153" width="1" height="1" fill="#ffff00"/>
<rect x="305" y="163" width="1" height="1" fill="#ffff00"/>
<rect x="307" y="163" width="1" height="1" fill="#ffff00"/>
<rect x="310" y="154" width="1" height="1" fill="#ffff00"/>
<rect x="311" y="154" width="1" height="1" fill="#ffff00"/>
<rect x="311" y="163" width="1" height="1" fill="#ffff00"/>
<rect x="312" y="154" width="1" height="1" fill="#ffff00"/>
<rect x="312" y="153" width="1" height="1" fill="#ffff00"/>
<rect x="312" y="163" width="1" height="1" fill="#ffff00"/>
<rect x="313" y="154" width="1" height="1" fill="#ffff00"/>
<rect x="313" y="163" width="1" height="1" fill="#ffff00"/>
<rect x="315" y="154" width="1" height="1" fill="#ffff00"/>
<rect x="316" y="163" width="1" height="1" fill="#ffff00"/>
<rect x="317" y="163" width="1" height="1" fill="#ffff00"/>
<rect x="318" y="154" width="1" height="1" fill="#ffff00"/>
<rect x="320" y="154" width="1" height="1" fill="#ffff00"/>
<rect x="321" y="154" width="1" height="1" fill="#ffff00"/>
<rect x="321" y="163" width="1" height="1" fill="#ffff00"/>
<rect x="322" y="154" width="1" height="1" fill="#ffff00"/>
<rect x="324" y="154" width="1" height="1" fill="#ffff00"/>
<rect x="325" y="154" width="1" height="1" fill="#ffff00"/>
<rect x="327" y="154" width="1" height="1" fill="#ffff00"/>
<rect x="328" y="154" width="1" height="1" fill="#ffff00"/>
<rect x="329" y="154" width="1" height="1" fill="#ffff00"/>
<rect x="330" y="154" width="1" height="1" fill="#ffff00"/>
<rect x="330" y="163" width="1" height="1" fill="#ffff00"/>
<rect x="331" y="163" width="1" height="1" fill="#ffff00"/>
<rect x="332" y="154" width="1" height="1" fill="#ffff00"/>
<rect x="334" y="164" width="1" height="1" fill="#ffff00"/>
<rect x="335" y="154" width="1" height="1" fill="#ffff00"/>
<rect x="336" y="154" width="1" height="1" fill="#ffff00"/>
<rect x="336" y="163" width="1" height="1" fill="#ffff00"/>
<rect x="338" y="154" width="1" height="1" fill="#ffff00"/>
<rect x="338" y="163" width="1" height="1" fill="#ffff00"/>
<rect x="339" y="163" width="1" height="1" fill="#ffff00"/>
<rect x="340" y="163" width="1" height="1" fill="#ffff00"/>
<rect x="341" y="163" width="1" height="1" fill="#ffff00"/>
<rect x="342" y="163" width="1" height="1" fill="#ffff00"/>
<rect x="343" y="154" width="1" height="1" fill="#ffff00"/>
<rect x="344" y="154" width="1" height="1" fill="#ffff00"/>
<rect x="345" y="154" width="1" height="1" fill="#ffff00"/>
<rect x="345" y="163" width="1" height="1" fill="#ffff00"/>
<rect x="347" y="154" width="1" height="1" fill="#ffff00"/>
<rect x="347" y="163" width="1" height="1" fill="#ffff00"/>
<rect x="348" y="154" width="1" height="1" fill="#ffff00"/>
<rect x="350" y="154" width="1" height="1" fill="#ffff00"/>
<rect x="352" y="154" width="1" height="1" fill="#ffff00"/>
<rect x="355" y="154" width="1" height="1" fill="#ffff00"/>
<rect x="358" y="154" width="1" height="1" fill="#ffff00"/>
<rect x="359" y="163" width="1" height="1" fill="#ffff00"/>
<rect x="360" y="154" width="1" height="1" fill="#ffff00"/>
<rect x="361" y="154" width="1" height="1" fill="#ffff00"/>
<rect x="363" y="154" width="1" height="1" fill="#ffff00"/>
<rect x="363" y="163" width="1" height="1" fill="#ffff00"/>
<rect x="364" y="154" width="1" height="1" fill="#ffff00"/>
<rect x="364" y="163" width="1" height="1" fill="#ffff00"/>
<rect x="365" y="154" width="1" height="1" fill="#ffff00"/>
<rect x="365" y="163" width="1" height="1" fill="#ffff00"/>
<rect x="366" y="154" width="1" height="1" fill="#ffff00"/>
<rect x="367" y="154" width="1" height="1" fill="#ffff00"/>
<rect x="367" y="163" width="1" height="1" fill="#ffff00"/>
<rect x="368" y="163" width="1" height="1" fill="#ffff00"/>
<rect x="369" y="154" width="1" height="1" fill="#ffff00"/>
<rect x="369" y="163" width="1" height="1" fill="#ffff00"/>
<rect x="371" y="154" width="1" height="1" fill="#ffff00"/>
<rect x="375" y="154" width="1" height="1" fill="#ffff00"/>
<rect x="375" y="163" width="1" height="1" fill="#ffff00"/>
<rect x="376" y="154" width="1" height="1" fill="#ffff00"/>
<rect x="377" y="154" width="1" height="1" fill="#ffff00"/>
<rect x="378" y="163" width="1" height="1" fill="#ffff00"/>
<rect x="379" y="163" width="1" height="1" fill="#ffff00"/>
<rect x="380" y="153" width="1" height="1" fill="#ffff00"/>
<rect x="380" y="163" width="1" height="1" fill="#ffff00"/>
<rect x="381" y="163" width="1" height="1" fill="#ffff00"/>
<rect x="382" y="154" width="1" height="1" fill="#ffff00"/>
<rect x="383" y="163" width="1" height="1" fill="#ffff00"/>
<rect x="385" y="163" width="1" height="1" fill="#ffff00"/>
<rect x="387" y="163" width="1" height="1" fill="#ffff00"/>
<rect x="390" y="154" width="1" height="1" fill="#ffff00"/>
<rect x="393" y="154" width="1" height="1" fill="#ffff00"/>
<rect x="394" y="154" width="1" height="1" fill="#ffff00"/>
<rect x="396" y="154" width="1" height="1" fill="#ffff00"/>
<rect x="397" y="163" width="1" height="1" fill="#ffff00"/>
<rect x="398" y="154" width="1" height="1" fill="#ffff00"/>
<rect x="401" y="154" width="1" height="1" fill="#ffff00"/>
<rect x="401" y="163" width="1" height="1" fill="#ffff00"/>
<rect x="402" y="163" width="1" height="1" fill="#ffff00"/>
<rect x="403" y="163" width="1" height="1" fill="#ffff00"/>
<rect x="404" y="154" width="1" height="1" fill="#ffff00"/>
<rect x="408" y="163" width="1" height="1" fill="#ffff00"/>
<rect x="411" y="154" width="1" height="1" fill="#ffff00"/>
<rect x="412" y="163" width="1" height="1" fill="#ffff00"/>
<rect x="413" y="154" width="1" height="1" fill="#ffff00"/>
<rect x="414" y="163" width="1" height="1" fill="#ffff00"/>
<rect x="416" y="154" width="1" height="1" fill="#ffff00"/>
<rect x="417" y="154" width="1" height="1" fill="#ffff00"/>
<rect x="417" y="153" width="1" height="1" fill="#ffff00"/>
<rect x="417" y="163" width="1" height="1" fill="#ffff00"/>
<rect x="418" y="154" width="1" height="1" fill="#ffff00"/>
<rect x="418" y="163" width="1" height="1" fill="#ffff00"/>
<rect x="419" y="154" width="1" height="1" fill="#ffff00"/>
<rect x="419" y="153" width="1" height="1" fill="#ffff00"/>
<rect x="420" y="163" width="1" height="1" fill="#ffff00"/>
<rect x="423" y="154" width="1" height="1" fill="#ffff00"/>
<rect x="423" y="164" width="1" height="1" fill="#ffff00"/>
<rect x="424" y="154" width="1" height="1" fill="#ffff00"/>
<rect x="425" y="154" width="1" height="1" fill="#ffff00"/>
<rect x="425" y="163" width="1" height="1" fill="#ffff00"/>
<rect x="427" y="154" width="1" height="1" fill="#ffff00"/>
<rect x="427" y="163" width="1" height="1" fill="#ffff00"/>
<rect x="428" y="154" width="1" height="1" fill="#ffff00"/>
<rect x="429" y="154" width="1" height="1" fill="#ffff00"/>
<rect x="430" y="163" width="1" height="1" fill="#ffff00"/>
<rect x="433" y="154" width="1" height="1" fill="#ffff00"/>
<rect x="435" y="154" width="1" height="1" fill="#ffff00"/>
<rect x="436" y="163" width="1" height="1" fill="#ffff00"/>
<rect x="439" y="154" width="1" height="1" fill="#ffff00"/>
<rect x="440" y="154" width="1" height="1" fill="#ffff00"/>
<rect x="442" y="154" width="1" height="1" fill="#ffff00"/>
<rect x="443" y="154" width="1" height="1" fill="#ffff00"/>
<rect x="445" y="163" width="1" height="1" fill="#ffff00"/>
<rect x="446" y="154" width="1" height="1" fill="#ffff00"/>
<rect x="447" y="154" width="1" height="1" fill="#ffff00"/>
<rect x="447" y="163" width="1" height="1" fill="#ffff00"/>
<rect x="448" y="163" width="1" height="1" fill="#ffff00"/>
<rect x="450" y="153" width="1" height="1" fill="#ffff00"/>
<rect x="450" y="163" width="1" height="1" fill="#ffff00"/>
<rect x="453" y="163" width="1" height="1" fill="#ffff00"/>
<rect x="454" y="154" width="1" height="1" fill="#ffff00"/>
<rect x="454" y="163" width="1" height="1" fill="#ffff00"/>
<rect x="457" y="154" width="1" height="1" fill="#ffff00"/>
<rect x="457" y="163" width="1" height="1" fill="#ffff00"/>
<rect x="459" y="154" width="1" height="1" fill="#ffff00"/>
<rect x="460" y="154" width="1" height="1" fill="#ffff00"/>
<rect x="460" y="163" width="1" height="1" fill="#ffff00"/>
<rect x="463" y="154" width="1" height="1" fill="#ffff00"/>
<rect x="465" y="154" width="1" height="1" fill="#ffff00"/>
<rect x="465" y="163" width="1" height="1" fill="#ffff00"/>
<rect x="466" y="163" width="1" height="1" fill="#ffff00"/>
<rect x="467" y="153" width="1" height="1" fill="#ffff00"/>
<rect x="468" y="154" width="1" height="1" fill="#ffff00"/>
<rect x="468" y="163" width="1" height="1" fill="#ffff00"/>
<rect x="469" y="163" width="1" height="1" fill="#ffff00"/>
<rect x="470" y="154" width="1" height="1" fill="#ffff00"/>
<rect x="472" y="163" width="1" height="1" fill="#ffff00"/>
<rect x="473" y="163" width="1" height="1" fill="#ffff00"/>
<rect x="474" y="154" width="1" height="1" fill="#ffff00"/>
<rect x="474" y="163" width="1" height="1" fill="#ffff00"/>
<rect x="475" y="163" width="1" height="1" fill="#ffff00"/>
<rect x="476" y="154" width="1" height="1" fill="#ffff00"/>
<rect x="476" y="163" width="1" height="1" fill="#ffff00"/>
<rect x="477" y="154" width="1" height="1" fill="#ffff00"/>
<rect x="478" y="163" width="1" height="1" fill="#ffff00"/>
<rect x="479" y="154" width="1" height="1" fill="#ffff00"/>
<rect x="480" y="154" width="1" height="1" fill="#ffff00"/>
<rect x="481" y="164" width="1" height="1" fill="#ffff00"/>
<rect x="482" y="163" width="1" height="1" fill="#ffff00"/>
<rect x="482" y="164" width="1" height="1" fill="#ffff00"/>
<rect x="483" y="163" width="1" height="1" fill="#ffff00"/>
<rect x="485" y="154" width="1" height="1" fill="#ffff00"/>
<rect x="486" y="154" width="1" height="1" fill="#ffff00"/>
<rect x="487" y="154" width="1" height="1" fill="#ffff00"/>
<rect x="488" y="163" width="1" height="1" fill="#ffff00"/>
<rect x="491" y="153" width="1" height="1" fill="#ffff00"/>
<rect x="492" y="163" width="1" height="1" fill="#ffff00"/>
<rect x="493" y="154" width="1" height="1" fill="#ffff00"/>
<rect x="494" y="154" width="1" height="1" fill="#ffff00"/>
<rect x="495" y="154" width="1" height="1" fill="#ffff00"/>
<rect x="496" y="154" width="1" height="1" fill="#ffff00"/>
<rect x="497" y="154" width="1" height="1" fill="#ffff00"/>
<rect x="498" y="164" width="1" height="1" fill="#ffff00"/>
<rect x="499" y="163" width="1" height="1" fill="#ffff00"/>
<rect x="500" y="154" width="1" height="1" fill="#ffff00"/>
<rect x="500" y="163" width="1" height="1" fill="#ffff00"/>
<rect x="501" y="163" width="1" height="1" fill="#ffff00"/>
<rect x="503" y="163" width="1" height="1" fill="#ffff00"/>
<rect x="504" y="163" width="1" height="1" fill="#ffff00"/>
<rect x="505" y="154" width="1" height="1" fill="#ffff00"/>
<rect x="506" y="154" width="1" height="1" fill="#ffff00"/>
<rect x="509" y="163" width="1" height="1" fill="#ffff00"/>
<rect x="510" y="154" width="1" height="1" fill="#ffff00"/>
<rect x="511" y="163" width="1" height="1" fill="#ffff00"/>
<rect x="512" y="163" width="1" height="1" fill="#ffff00"/>
<rect x="514" y="154" width="1" height="1" fill="#ffff00"/>
<rect x="514" y="163" width="1" height="1" fill="#ffff00"/>
<rect x="520" y="154" width="1" height="1" fill="#ffff00"/>
<rect x="520" y="163" width="1" height="1" fill="#ffff00"/>
<rect x="521" y="163" width="1" height="1" fill="#ffff00"/>
<rect x="522" y="163" width="1" height="1" fill="#ffff00"/>
<rect x="523" y="154" width="1" height="1" fill="#ffff00"/>
<rect x="523" y="163" width="1" height="1" fill="#ffff00"/>
<rect x="524" y="154" width="1" height="1" fill="#ffff00"/>
<rect x="525" y="163" width="1" height="1" fill="#ffff00"/>
<rect x="527" y="154" width="1" height="1" fill="#ffff00"/>
<rect x="527" y="163" width="1" height="1" fill="#ffff00"/>
<rect x="528" y="154" width="1" height="1" fill="#ffff00"/>
<rect x="528" y="163" width="1" height="1" fill="#ffff00"/>
<rect x="530" y="154" width="1" height="1" fill="#ffff00"/>
<rect x="530" y="163" width="1" height="1" fill="#ffff00"/>
<rect x="531" y="154" width="1" height="1" fill="#ffff00"/>
<rect x="532" y="154" width="1" height="1" fill="#ffff00"/>
<rect x="533" y="154" width="1" height="1" fill="#ffff00"/>
<rect x="534" y="154" width="1" height="1" fill="#ffff00"/>
<rect x="538" y="153" width="1" height="1" fill="#ffff00"/>
<rect x="542" y="154" width="1" height="1" fill="#ffff00"/>
<rect x="544" y="154" width="1" height="1" fill="#ffff00"/>
<rect x="544" y="163" width="1" height="1" fill="#ffff00"/>
<rect x="547" y="154" width="1" height="1" fill="#ffff00"/>
<rect x="547" y="163" width="1" height="1" fill="#ffff00"/>
<rect x="551" y="154" width="1" height="1" fill="#ffff00"/>
<rect x="552" y="154" width="1" height="1" fill="#ffff00"/>
<rect x="554" y="154" width="1" height="1" fill="#ffff00"/>
<rect x="555" y="163" width="1" height="1" fill="#ffff00"/>
<rect x="558" y="163" width="1" height="1" fill="#ffff00"/>
<rect x="559" y="163" width="1" height="1" fill="#ffff00"/>
<rect x="562" y="154" width="1" height="1" fill="#ffff00"/>
<rect x="562" y="163" width="1" height="1" fill="#ffff00"/>
<rect x="564" y="163" width="1" height="1" fill="#ffff00"/>
<rect x="566" y="154" width="1" height="1" fill="#ffff00"/>
<rect x="567" y="154" width="1" height="1" fill="#ffff00"/>
<rect x="568" y="163" width="1" height="1" fill="#ffff00"/>
<rect x="568" y="164" width="1" height="1" fill="#ffff00"/>
<rect x="570" y="154" width="1" height="1" fill="#ffff00"/>
<rect x="570" y="163" width="1" height="1" fill="#ffff00"/>
<rect x="572" y="154" width="1" height="1" fill="#ffff00"/>
<rect x="573" y="154" width="1" height="1" fill="#ffff00"/>
<rect x="573" y="163" width="1" height="1" fill="#ffff00"/>
<rect x="576" y="163" width="1" height="1" fill="#ffff00"/>
<rect x="578" y="163" width="1" height="1" fill="#ffff00"/>
<rect x="579" y="154" width="1" height="1" fill="#ffff00"/>
<rect x="581" y="154" width="1" height="1" fill="#ffff00"/>
<rect x="581" y="163" width="1" height="1" fill="#ffff00"/>
<rect x="582" y="154" width="1" height="1" fill="#ffff00"/>
<rect x="582" y="163" width="1" height="1" fill="#ffff00"/>
<rect x="583" y="154" width="1" height="1" fill="#ffff00"/>
<rect x="584" y="154" width="1" height="1" fill="#ffff00"/>
<rect x="584" y="163" width="1" height="1" fill="#ffff00"/>
<rect x="587" y="154" width="1" height="1" fill="#ffff00"/>
<rect x="587" y="163" width="1" height="1" fill="#ffff00"/>
<rect x="590" y="154" width="1" height="1" fill="#ffff00"/>
<rect x="592" y="154" width="1" height="1" fill="#ffff00"/>
<rect x="594" y="154" width="1" height="1" fill="#ffff00"/>
<rect x="595" y="154" width="1" height="1" fill="#ffff00"/>
<rect x="596" y="154" width="1" height="1" fill="#ffff00"/>
<rect x="597" y="154" width="1" height="1" fill="#ffff00"/>
<rect x="597" y="163" width="1" height="1" fill="#ffff00"/>
<rect x="599" y="154" width="1" height="1" fill="#ffff00"/>
<rect x="599" y="163" width="1" height="1" fill="#ffff00"/>
<rect x="602" y="163" width="1" height="1" fill="#ffff00"/>
<rect x="603" y="163" width="1" height="1" fill="#ffff00"/>
<rect x="604" y="154" width="1" height="1" fill="#ffff00"/>
<rect x="605" y="154" width="1" height="1" fill="#ffff00"/>
<rect x="607" y="154" width="1" height="1" fill="#ffff00"/>
<rect x="607" y="164" width="1" height="1" fill="#ffff00"/>
<rect x="608" y="163" width="1" height="1" fill="#ffff00"/>
<rect x="609" y="163" width="1" height="1" fill="#ffff00"/>
<rect x="610" y="154" width="1" height="1" fill="#ffff00"/>
<rect x="610" y="163" width="1" height="1" fill="#ffff00"/>
<rect x="612" y="163" width="1" height="1" fill="#ffff00"/>
<rect x="615" y="154" width="1" height="1" fill="#ffff00"/>
<rect x="617" y="163" width="1" height="1" fill="#ffff00"/>
<rect x="619" y="154" width="1" height="1" fill="#ffff00"/>
<rect x="620" y="154" width="1" height="1" fill="#ffff00"/>
<rect x="621" y="154" width="1" height="1" fill="#ffff00"/>
<rect x="622" y="163" width="1" height="1" fill="#ffff00"/>
<rect x="623" y="154" width="1" height="1" fill="#ffff00"/>
<rect x="624" y="163" width="1" height="1" fill="#ffff00"/>
<rect x="626" y="154" width="1" height="1" fill="#ffff00"/>
<rect x="627" y="154" width="1" height="1" fill="#ffff00"/>
<rect x="627" y="163" width="1" height="1" fill="#ffff00"/>
<rect x="628" y="154" width="1" height="1" fill="#ffff00"/>
<rect x="629" y="154" width="1" height="1" fill="#ffff00"/>
<rect x="629" y="163" width="1" height="1" fill="#ffff00"/>
<rect x="629" y="164" width="1" height="1" fill="#ffff00"/>
<rect x="630" y="163" width="1" height="1" fill="#ffff00"/>
<rect x="631" y="163" width="1" height="1" fill="#ffff00"/>
<rect x="632" y="154" width="1" height="1" fill="#ffff00"/>
<rect x="632" y="164" width="1" height="1" fill="#ffff00"/>
<rect x="634" y="163" width="1" height="1" fill="#ffff00"/>
<rect x="635" y="154" width="1" height="1" fill="#ffff00"/>
<rect x="636" y="154" width="1" height="1" fill="#ffff00"/>
<rect x="637" y="154" width="1" height="1" fill="#ffff00"/>
<rect x="638" y="154" width="1" height="1" fill="#ffff00"/>
<rect x="639" y="154" width="1" height="1" fill="#ffff00"/>
<rect x="640" y="154" width="1" height="1" fill="#ffff00"/>
<rect x="642" y="163" width="1" height="1" fill="#ffff00"/>
<rect x="644" y="154" width="1" height="1" fill="#ffff00"/>
<rect x="644" y="163" width="1" height="1" fill="#ffff00"/>
<rect x="645" y="154" width="1" height="1" fill="#ffff00"/>
<rect x="645" y="164" width="1" height="1" fill="#ffff00"/>
<rect x="647" y="154" width="1" height="1" fill="#ffff00"/>
<rect x="648" y="154" width="1" height="1" fill="#ffff00"/>
<rect x="649" y="163" width="1" height="1" fill="#ffff00"/>
<rect x="650" y="163" width="1" height="1" fill="#ffff00"/>
<rect x="651" y="154" width="1" height="1" fill="#ffff00"/>
<rect x="654" y="154" width="1" height="1" fill="#ffff00"/>
<rect x="656" y="154" width="1" height="1" fill="#ffff00"/>
<rect x="657" y="154" width="1" height="1" fill="#ffff00"/>
<rect x="658" y="154" width="1" height="1" fill="#ffff00"/>
<rect x="659" y="154" width="1" height="1" fill="#ffff00"/>
<rect x="660" y="154" width="1" height="1" fill="#ffff00"/>
<rect x="660" y="163" width="1" height="1" fill="#ffff00"/>
<rect x="662" y="154" width="1" height="1" fill="#ffff00"/>
<rect x="662" y="163" width="1" height="1" fill="#ffff00"/>
<rect x="664" y="154" width="1" height="1" fill="#ffff00"/>
<rect x="666" y="154" width="1" height="1" fill="#ffff00"/>
<rect x="668" y="163" width="1" height="1" fill="#ffff00"/>
<rect x="669" y="154" width="1" height="1" fill="#ffff00"/>
<rect x="669" y="163" width="1" height="1" fill="#ffff00"/>
<rect x="672" y="154" width="1" height="1" fill="#ffff00"/>
<rect x="673" y="163" width="1" height="1" fill="#ffff00"/>
<rect x="676" y="154" width="1" height="1" fill="#ffff00"/>
<rect x="677" y="154" width="1" height="1" fill="#ffff00"/>
<rect x="678" y="154" width="1" height="1" fill="#ffff00"/>
<rect x="678" y="153" width="1" height="1" fill="#ffff00"/>
<rect x="678" y="163" width="1" height="1" fill="#ffff00"/>
<rect x="679" y="154" width="1" height="1" fill="#ffff00"/>
<rect x="679" y="163" width="1" height="1" fill="#ffff00"/>
<rect x="680" y="154" width="1" height="1" fill="#ffff00"/>
<rect x="681" y="164" width="1" height="1" fill="#ffff00"/>
<rect x="682" y="154" width="1" height="1" fill="#ffff00"/>
<rect x="683" y="163" width="1" height="1" fill="#ffff00"/>
<rect x="686" y="154" width="1" height="1" fill="#ffff00"/>
<rect x="686" y="163" width="1" height="1" fill="#ffff00"/>
<rect x="687" y="163" width="1" height="1" fill="#ffff00"/>
<rect x="689" y="154" width="1" height="1" fill="#ffff00"/>
<rect x="689" y="164" width="1" height="1" fill="#ffff00"/>
<rect x="690" y="163" width="1" height="1" fill="#ffff00"/>
<rect x="691" y="163" width="1" height="1" fill="#ffff00"/>
<rect x="692" y="154" width="1" height="1" fill="#ffff00"/>
<rect x="695" y="154" width="1" height="1" fill="#ffff00"/>
<rect x="698" y="163" width="1" height="1" fill="#ffff00"/>
<rect x="699" y="154" width="1" height="1" fill="#ffff00"/>
<rect x="700" y="154" width="1" height="1" fill="#ffff00"/>
<rect x="701" y="154" width="1" height="1" fill="#ffff00"/>
<rect x="702" y="163" width="1" height="1" fill="#ffff00"/>
<rect x="703" y="154" width="1" height="1" fill="#ffff00"/>
<rect x="705" y="154" width="1" height="1" fill="#ffff00"/>
<rect x="706" y="154" width="1" height="1" fill="#ffff00"/>
<rect x="707" y="154" width="1" height="1" fill="#ffff00"/>
<rect x="708" y="154" width="1" height="1" fill="#ffff00"/>
<rect x="708" y="153" width="1" height="1" fill="#ffff00"/>
<rect x="708" y="163" width="1" height="1" fill="#ffff00"/>
<rect x="713" y="154" width="1" height="1" fill="#ffff00"/>
<rect x="716" y="154" width="1" height="1" fill="#ffff00"/>
<rect x="716" y="163" width="1" height="1" fill="#ffff00"/>
<rect x="717" y="154" width="1" height="1" fill="#ffff00"/>
<rect x="718" y="153" width="1" height="1" fill="#ffff00"/>
<rect x="720" y="154" width="1" height="1" fill="#ffff00"/>
<rect x="720" y="163" width="1" height="1" fill="#ffff00"/>
<rect x="726" y="163" width="1" height="1" fill="#ffff00"/>
<rect x="726" y="164" width="1" height="1" fill="#ffff00"/>
<rect x="729" y="154" width="1" height="1" fill="#ffff00"/>
<rect x="729" y="163" width="1" height="1" fill="#ffff00"/>
<rect x="731" y="154" width="1" height="1" fill="#ffff00"/>
<rect x="732" y="154" width="1" height="1" fill="#ffff00"/>
<rect x="732" y="153" width="1" height="1" fill="#ffff00"/>
<rect x="735" y="154" width="1" height="1" fill="#ffff00"/>
<rect x="735" y="163" width="1" height="1" fill="#ffff00"/>
<rect x="736" y="154" width="1" height="1" fill="#ffff00"/>
<rect x="736" y="163" width="1" height="1" fill="#ffff00"/>
<rect x="737" y="154" width="1" height="1" fill="#ffff00"/>
<rect x="738" y="154" width="1" height="1" fill="#ffff00"/>
<rect x="738" y="163" width="1" height="1" fill="#ffff00"/>
<rect x="739" y="154" width="1" height="1" fill="#ffff00"/>
<rect x="740" y="154" width="1" height="1" fill="#ffff00"/>
<rect x="740" y="163" width="1" height="1" fill="#ffff00"/>
<rect x="741" y="154" width="1" height="1" fill="#ffff00"/>
<rect x="742" y="163" width="1" height="1" fill="#ffff00"/>
<rect x="743" y="163" width="1" height="1" fill="#ffff00"/>
<rect x="745" y="154" width="1" height="1" fill="#ffff00"/>
<rect x="747" y="154" width="1" height="1" fill="#ffff00"/>
<rect x="747" y="153" width="1" height="1" fill="#ffff00"/>
<rect x="747" y="163" width="1" height="1" fill="#ffff00"/>
<rect x="748" y="154" width="1" height="1" fill="#ffff00"/>
<rect x="748" y="163" width="1" height="1" fill="#ffff00"/>
<rect x="749" y="154" width="1" height="1" fill="#ffff00"/>
<rect x="750" y="154" width="1" height="1" fill="#ffff00"/>
<rect x="751" y="163" width="1" height="1" fill="#ffff00"/>
<rect x="753" y="154" width="1" height="1" fill="#ffff00"/>
<rect x="753" y="163" width="1" height="1" fill="#ffff00"/>
<rect x="754" y="154" width="1" height="1" fill="#ffff00"/>
<rect x="754" y="163" width="1" height="1" fill="#ffff00"/>
<rect x="755" y="154" width="1" height="1" fill="#ffff00"/>
<rect x="755" y="163" width="1" height="1" fill="#ffff00"/>
<rect x="756" y="154" width="1" height="1" fill="#ffff00"/>
<rect x="757" y="154" width="1" height="1" fill="#ffff00"/>
<rect x="758" y="154" width="1" height="1" fill="#ffff00"/>
<rect x="759" y="154" width="1" height="1" fill="#ffff00"/>
<rect x="759" y="163" width="1" height="1" fill="#ffff00"/>
<rect x="760" y="154" width="1" height="1" fill="#ffff00"/>
<rect x="94" y="59" width="1" height="96" fill="#f0f060"/>
<rect x="248" y="59" width="1" height="96" fill="#f0f060"/>
<rect x="558" y="59" width="1" height="96" fill="#f0f060"/>
<rect x="712" y="59" width="1" height="96" fill="#f0f060"/>
<rect x="403" y="59" width="1" height="96" fill="#e8c850"/>
<rect x="403" y="155" width="3" height="9" fill="#ffb400"/>
<rect x="403" y="196" width="1" height="1" fill="#ffff00"/>
<rect x="402" y="197" width="3" height="2" fill="#ffff00"/>
<rect x="401" y="199" width="5" height="2" fill="#ffff00"/>
<rect x="400" y="201" width="7" height="3" fill="#ffff00"/>
<rect x="403" y="367" width="1" height="1" fill="#ffc800"/>
<rect x="402" y="368" width="3" height="2" fill="#ffc800"/>
<rect x="401" y="370" width="5" height="2" fill="#ffc800"/>
<rect x="400" y="372" width="7" height="3" fill="#ffc800"/>
<rect x="790" y="114" width="2" height="1" fill="#ffff00"/>
<rect x="792" y="113" width="2" height="3" fill="#ffff00"/>
<rect x="794" y="112" width="2" height="5" fill="#ffff00"/>
<rect x="796" y="111" width="2" height="7" fill="#ffff00"/>
<polyline points="17.5,348.5 32.5,348.5 47.5,348.5 63.5,347.5 78.5,347.5 94.5,346.5 109.5,348.5 125.5,347.5 140.5,347.5 155.5,346.5 171.5,347.5 186.5,347.5 202.5,347.5 217.5,348.5 233.5,346.5 248.5,349.5 264.5,346.5 279.5,346.5 295.5,347.5 310.5,348.5 326.5,347.5 341.5,346.5 356.5,348.5 372.5,347.5 387.5,347.5 403.5,304.5 418.5,218.5 434.5,347.5 449.5,348.5 465.5,347.5 480.5,348.5 496.5,348.5 511.5,347.5 527.5,348.5 542.5,347.5 557.5,347.5 573.5,348.5 588.5,349.5 604.5,347.5 619.5,347.5 635.5,348.5 650.5,348.5 666.5,348.5 681.5,348.5 697.5,346.5 712.5,347.5 727.5,347.5 743.5,348.5 758.5,348.5 774.5,348.5 789.5,347.5" fill="none" stroke="#e8c040" stroke-width="1" shape-rendering="crispEdges"/>
<rect x="17" y="347" width="2" height="3" fill="#f8c400"/>
<rect x="31" y="347" width="3" height="3" fill="#f8c400"/>
<rect x="46" y="347" width="3" height="3" fill="#f8c400"/>
<rect x="62" y="346" width="3" height="3" fill="#f8c400"/>
<rect x="77" y="346" width="3" height="3" fill="#f8c400"/>
<rect x="93" y="345" width="3" height="3" fill="#f8c400"/>
<rect x="108" y="347" width="3" height="3" fill="#f8c400"/>
<rect x="124" y="346" width="3" height="3" fill="#f8c400"/>
<rect x="139" y="346" width="3" height="3" fill="#f8c400"/>
<rect x="154" y="345" width="3" height="3" fill="#f8c400"/>
<rect x="170" y="346" width="3" height="3" fill="#f8c400"/>
<rect x="185" y="346" width="3" height="3" fill="#f8c400"/>
<rect x="201" y="346" width="3" height="3" fill="#f8c400"/>
<rect x="216" y="347" width="3" height="3" fill="#f8c400"/>
<rect x="232" y="345" width="3" height="3" fill="#f8c400"/>
<rect x="247" y="348" width="3" height="3" fill="#f8c400"/>
<rect x="263" y="345" width="3" height="3" fill="#f8c400"/>
<rect x="278" y="345" width="3" height="3" fill="#f8c400"/>
<rect x="294" y="346" width="3" height="3" fill="#f8c400"/>
<rect x="309" y="347" width="3" height="3" fill="#f8c400"/>
<rect x="325" y="346" width="3" height="3" fill="#f8c400"/>
<rect x="340" y="345" width="3" height="3" fill="#f8c400"/>
<rect x="355" y="347" width="3" height="3" fill="#f8c400"/>
<rect x="371" y="346" width="3" height="3" fill="#f8c400"/>
<rect x="386" y="346" width="3" height="3" fill="#f8c400"/>
<rect x="402" y="303" width="3" height="3" fill="#f8c400"/>
<rect x="417" y="217" width="3" height="3" fill="#f8c400"/>
<rect x="433" y="346" width="3" height="3" fill="#f8c400"/>
<rect x="448" y="347" width="3" height="3" fill="#f8c400"/>
<rect x="464" y="346" width="3" height="3" fill="#f8c400"/>
<rect x="479" y="347" width="3" height="3" fill="#f8c400"/>
<rect x="495" y="347" width="3" height="3" fill="#f8c400"/>
<rect x="510" y="346" width="3" height="3" fill="#f8c400"/>
<rect x="526" y="347" width="3" height="3" fill="#f8c400"/>
<rect x="541" y="346" width="3" height="3" fill="#f8c400"/>
<rect x="556" y="346" width="3" height="3" fill="#f8c400"/>
<rect x="572" y="347" width="3" height="3" fill="#f8c400"/>
<rect x="587" y="348" width="3" height="3" fill="#f8c400"/>
<rect x="603" y="346" width="3" height="3" fill="#f8c400"/>
<rect x="618" y="346" width="3" height="3" fill="#f8c400"/>
<rect x="634" y="347" width="3" height="3" fill="#f8c400"/>
<rect x="649" y="347" width="3" height="3" fill="#f8c400"/>
<rect x="665" y="347" width="3" height="3" fill="#f8c400"/>
<rect x="680" y="347" width="3" height="3" fill="#f8c400"/>
<rect x="696" y="345" width="3" height="3" fill="#f8c400"/>
<rect x="711" y="346" width="3" height="3" fill="#f8c400"/>
<rect x="726" y="346" width="3" height="3" fill="#f8c400"/>
<rect x="742" y="347" width="3" height="3" fill="#f8c400"/>
<rect x="757" y="347" width="3" height="3" fill="#f8c400"/>
<rect x="773" y="347" width="3" height="3" fill="#f8c400"/>
<rect x="788" y="346" width="2" height="3" fill="#f8c400"/>
<text x="5" y="388.5" fill="#e0dce8" font-size="11" text-anchor="start" font-weight="bold" letter-spacing="0.3">Measure</text>
<text x="5" y="404.5" fill="#ffffff" font-size="11" text-anchor="start" font-weight="normal">value</text>
<text x="5" y="420.5" fill="#ffffff" font-size="11" text-anchor="start" font-weight="normal">mean</text>
<text x="5" y="436.5" fill="#ffffff" font-size="11" text-anchor="start" font-weight="normal">min</text>
<text x="5" y="452.5" fill="#ffffff" font-size="11" text-anchor="start" font-weight="normal">max</text>
<text x="5" y="468.5" fill="#ffffff" font-size="11" text-anchor="start" font-weight="normal">sdev</text>
<text x="5" y="484.5" fill="#ffffff" font-size="11" text-anchor="start" font-weight="normal">num</text>
<text x="5" y="500.5" fill="#ffffff" font-size="11" text-anchor="start" font-weight="normal">status</text>
<text x="178" y="388.5" fill="#ffffff" font-size="11" text-anchor="end" font-weight="normal">P1:freq(C1)</text>
<text x="178" y="404.5" fill="#ffffff" font-size="11" text-anchor="end" font-weight="normal">1.00000050 Hz</text>
<text x="178" y="420.5" fill="#ffffff" font-size="11" text-anchor="end" font-weight="normal">1.00000053 Hz</text>
<text x="178" y="436.5" fill="#ffffff" font-size="11" text-anchor="end" font-weight="normal">1.00000050 Hz</text>
<text x="178" y="452.5" fill="#ffffff" font-size="11" text-anchor="end" font-weight="normal">1.00000057 Hz</text>
<text x="178" y="468.5" fill="#ffffff" font-size="11" text-anchor="end" font-weight="normal">33.32 nHz</text>
<text x="178" y="484.5" fill="#ffffff" font-size="11" text-anchor="end" font-weight="normal">4</text>
<text x="266" y="388.5" fill="#ffffff" font-size="11" text-anchor="end" font-weight="normal">P2:width(F1)</text>
<text x="266" y="404.5" fill="#ffffff" font-size="11" text-anchor="end" font-weight="normal">136 ns</text>
<text x="266" y="420.5" fill="#ffffff" font-size="11" text-anchor="end" font-weight="normal">136.01 ns</text>
<text x="266" y="436.5" fill="#ffffff" font-size="11" text-anchor="end" font-weight="normal">136 ns</text>
<text x="266" y="452.5" fill="#ffffff" font-size="11" text-anchor="end" font-weight="normal">136 ns</text>
<text x="266" y="468.5" fill="#ffffff" font-size="11" text-anchor="end" font-weight="normal">---</text>
<text x="266" y="484.5" fill="#ffffff" font-size="11" text-anchor="end" font-weight="normal">1</text>
<text x="354" y="388.5" fill="#ffffff" font-size="11" text-anchor="end" font-weight="normal">P3:rise(F1)</text>
<text x="354" y="404.5" fill="#ffffff" font-size="11" text-anchor="end" font-weight="normal">---</text>
<text x="354" y="420.5" fill="#ffffff" font-size="11" text-anchor="end" font-weight="normal">---</text>
<text x="354" y="436.5" fill="#ffffff" font-size="11" text-anchor="end" font-weight="normal">---</text>
<text x="354" y="452.5" fill="#ffffff" font-size="11" text-anchor="end" font-weight="normal">---</text>
<text x="354" y="468.5" fill="#ffffff" font-size="11" text-anchor="end" font-weight="normal">---</text>
<text x="354" y="484.5" fill="#ffffff" font-size="11" text-anchor="end" font-weight="normal">0</text>
<text x="442" y="388.5" fill="#ffffff" font-size="11" text-anchor="end" font-weight="normal">P4:ovsh+(F1)</text>
<text x="442" y="404.5" fill="#ffffff" font-size="11" text-anchor="end" font-weight="normal">---</text>
<text x="442" y="420.5" fill="#ffffff" font-size="11" text-anchor="end" font-weight="normal">---</text>
<text x="442" y="436.5" fill="#ffffff" font-size="11" text-anchor="end" font-weight="normal">---</text>
<text x="442" y="452.5" fill="#ffffff" font-size="11" text-anchor="end" font-weight="normal">---</text>
<text x="442" y="468.5" fill="#ffffff" font-size="11" text-anchor="end" font-weight="normal">---</text>
<text x="442" y="484.5" fill="#ffffff" font-size="11" text-anchor="end" font-weight="normal">0</text>
<text x="530" y="388.5" fill="#ffffff" font-size="11" text-anchor="end" font-weight="normal">P5:fall(F1)</text>
<text x="530" y="404.5" fill="#ffffff" font-size="11" text-anchor="end" font-weight="normal">80 ns</text>
<text x="530" y="420.5" fill="#ffffff" font-size="11" text-anchor="end" font-weight="normal">80.08 ns</text>
<text x="530" y="436.5" fill="#ffffff" font-size="11" text-anchor="end" font-weight="normal">80 ns</text>
<text x="530" y="452.5" fill="#ffffff" font-size="11" text-anchor="end" font-weight="normal">80 ns</text>
<text x="530" y="468.5" fill="#ffffff" font-size="11" text-anchor="end" font-weight="normal">---</text>
<text x="530" y="484.5" fill="#ffffff" font-size="11" text-anchor="end" font-weight="normal">1</text>
<text x="618" y="388.5" fill="#ffffff" font-size="11" text-anchor="end" font-weight="normal">P6:ovsh-(F1)</text>
<text x="618" y="404.5" fill="#ffffff" font-size="11" text-anchor="end" font-weight="normal">---</text>
<text x="618" y="420.5" fill="#ffffff" font-size="11" text-anchor="end" font-weight="normal">---</text>
<text x="618" y="436.5" fill="#ffffff" font-size="11" text-anchor="end" font-weight="normal">---</text>
<text x="618" y="452.5" fill="#ffffff" font-size="11" text-anchor="end" font-weight="normal">---</text>
<text x="618" y="468.5" fill="#ffffff" font-size="11" text-anchor="end" font-weight="normal">---</text>
<text x="618" y="484.5" fill="#ffffff" font-size="11" text-anchor="end" font-weight="normal">0</text>
<text x="706" y="388.5" fill="#ffffff" font-size="11" text-anchor="end" font-weight="normal">P7:ampl(F1)</text>
<text x="706" y="404.5" fill="#ffffff" font-size="11" text-anchor="end" font-weight="normal">102.5 mV</text>
<text x="706" y="420.5" fill="#ffffff" font-size="11" text-anchor="end" font-weight="normal">102.531 mV</text>
<text x="706" y="436.5" fill="#ffffff" font-size="11" text-anchor="end" font-weight="normal">102.5 mV</text>
<text x="706" y="452.5" fill="#ffffff" font-size="11" text-anchor="end" font-weight="normal">102.5 mV</text>
<text x="706" y="468.5" fill="#ffffff" font-size="11" text-anchor="end" font-weight="normal">---</text>
<text x="706" y="484.5" fill="#ffffff" font-size="11" text-anchor="end" font-weight="normal">1</text>
<text x="794" y="388.5" fill="#ffffff" font-size="11" text-anchor="end" font-weight="normal">P8:pkpk(F1)</text>
<text x="794" y="404.5" fill="#ffffff" font-size="11" text-anchor="end" font-weight="normal">103 mV</text>
<text x="794" y="420.5" fill="#ffffff" font-size="11" text-anchor="end" font-weight="normal">102.53 mV</text>
<text x="794" y="436.5" fill="#ffffff" font-size="11" text-anchor="end" font-weight="normal">103 mV</text>
<text x="794" y="452.5" fill="#ffffff" font-size="11" text-anchor="end" font-weight="normal">103 mV</text>
<text x="794" y="468.5" fill="#ffffff" font-size="11" text-anchor="end" font-weight="normal">---</text>
<text x="794" y="484.5" fill="#ffffff" font-size="11" text-anchor="end" font-weight="normal">1</text>
<rect x="167" y="491" width="1" height="1" fill="#f0f040"/>
<rect x="168" y="492" width="1" height="1" fill="#f0f040"/>
<rect x="169" y="493" width="1" height="1" fill="#f0f040"/>
<rect x="177" y="491" width="1" height="1" fill="#f0f040"/>
<rect x="176" y="492" width="1" height="1" fill="#f0f040"/>
<rect x="175" y="493" width="1" height="1" fill="#f0f040"/>
<rect x="168" y="499" width="1" height="1" fill="#f0f040"/>
<rect x="167" y="500" width="1" height="1" fill="#f0f040"/>
<rect x="167" y="501" width="1" height="1" fill="#f0f040"/>
<rect x="176" y="499" width="1" height="1" fill="#f0f040"/>
<rect x="177" y="500" width="1" height="1" fill="#f0f040"/>
<rect x="177" y="501" width="1" height="1" fill="#f0f040"/>
<rect x="170" y="492" width="5" height="2" fill="#ffffff"/>
<rect x="170" y="494" width="5" height="4" fill="#f0f040"/>
<rect x="172" y="493" width="1" height="2" fill="#000"/>
<rect x="172" y="497" width="1" height="1" fill="#000"/>
<rect x="167" y="498" width="4" height="1" fill="#ffffff"/>
<rect x="174" y="498" width="4" height="1" fill="#ffffff"/>
<rect x="255" y="491" width="1" height="1" fill="#f0f040"/>
<rect x="256" y="492" width="1" height="1" fill="#f0f040"/>
<rect x="257" y="493" width="1" height="1" fill="#f0f040"/>
<rect x="265" y="491" width="1" height="1" fill="#f0f040"/>
<rect x="264" y="492" width="1" height="1" fill="#f0f040"/>
<rect x="263" y="493" width="1" height="1" fill="#f0f040"/>
<rect x="256" y="499" width="1" height="1" fill="#f0f040"/>
<rect x="255" y="500" width="1" height="1" fill="#f0f040"/>
<rect x="255" y="501" width="1" height="1" fill="#f0f040"/>
<rect x="264" y="499" width="1" height="1" fill="#f0f040"/>
<rect x="265" y="500" width="1" height="1" fill="#f0f040"/>
<rect x="265" y="501" width="1" height="1" fill="#f0f040"/>
<rect x="258" y="492" width="5" height="2" fill="#ffffff"/>
<rect x="258" y="494" width="5" height="4" fill="#f0f040"/>
<rect x="260" y="493" width="1" height="2" fill="#000"/>
<rect x="260" y="497" width="1" height="1" fill="#000"/>
<rect x="255" y="498" width="4" height="1" fill="#ffffff"/>
<rect x="262" y="498" width="4" height="1" fill="#ffffff"/>
<rect x="343" y="491" width="1" height="1" fill="#f0f040"/>
<rect x="344" y="492" width="1" height="1" fill="#f0f040"/>
<rect x="345" y="493" width="1" height="1" fill="#f0f040"/>
<rect x="353" y="491" width="1" height="1" fill="#f0f040"/>
<rect x="352" y="492" width="1" height="1" fill="#f0f040"/>
<rect x="351" y="493" width="1" height="1" fill="#f0f040"/>
<rect x="344" y="499" width="1" height="1" fill="#f0f040"/>
<rect x="343" y="500" width="1" height="1" fill="#f0f040"/>
<rect x="343" y="501" width="1" height="1" fill="#f0f040"/>
<rect x="352" y="499" width="1" height="1" fill="#f0f040"/>
<rect x="353" y="500" width="1" height="1" fill="#f0f040"/>
<rect x="353" y="501" width="1" height="1" fill="#f0f040"/>
<rect x="346" y="492" width="5" height="2" fill="#ffffff"/>
<rect x="346" y="494" width="5" height="4" fill="#f0f040"/>
<rect x="348" y="493" width="1" height="2" fill="#000"/>
<rect x="348" y="497" width="1" height="1" fill="#000"/>
<rect x="343" y="498" width="4" height="1" fill="#ffffff"/>
<rect x="350" y="498" width="4" height="1" fill="#ffffff"/>
<rect x="431" y="491" width="1" height="1" fill="#f0f040"/>
<rect x="432" y="492" width="1" height="1" fill="#f0f040"/>
<rect x="433" y="493" width="1" height="1" fill="#f0f040"/>
<rect x="441" y="491" width="1" height="1" fill="#f0f040"/>
<rect x="440" y="492" width="1" height="1" fill="#f0f040"/>
<rect x="439" y="493" width="1" height="1" fill="#f0f040"/>
<rect x="432" y="499" width="1" height="1" fill="#f0f040"/>
<rect x="431" y="500" width="1" height="1" fill="#f0f040"/>
<rect x="431" y="501" width="1" height="1" fill="#f0f040"/>
<rect x="440" y="499" width="1" height="1" fill="#f0f040"/>
<rect x="441" y="500" width="1" height="1" fill="#f0f040"/>
<rect x="441" y="501" width="1" height="1" fill="#f0f040"/>
<rect x="434" y="492" width="5" height="2" fill="#ffffff"/>
<rect x="434" y="494" width="5" height="4" fill="#f0f040"/>
<rect x="436" y="493" width="1" height="2" fill="#000"/>
<rect x="436" y="497" width="1" height="1" fill="#000"/>
<rect x="431" y="498" width="4" height="1" fill="#ffffff"/>
<rect x="438" y="498" width="4" height="1" fill="#ffffff"/>
<rect x="519" y="491" width="1" height="1" fill="#f0f040"/>
<rect x="520" y="492" width="1" height="1" fill="#f0f040"/>
<rect x="521" y="493" width="1" height="1" fill="#f0f040"/>
<rect x="529" y="491" width="1" height="1" fill="#f0f040"/>
<rect x="528" y="492" width="1" height="1" fill="#f0f040"/>
<rect x="527" y="493" width="1" height="1" fill="#f0f040"/>
<rect x="520" y="499" width="1" height="1" fill="#f0f040"/>
<rect x="519" y="500" width="1" height="1" fill="#f0f040"/>
<rect x="519" y="501" width="1" height="1" fill="#f0f040"/>
<rect x="528" y="499" width="1" height="1" fill="#f0f040"/>
<rect x="529" y="500" width="1" height="1" fill="#f0f040"/>
<rect x="529" y="501" width="1" height="1" fill="#f0f040"/>
<rect x="522" y="492" width="5" height="2" fill="#ffffff"/>
<rect x="522" y="494" width="5" height="4" fill="#f0f040"/>
<rect x="524" y="493" width="1" height="2" fill="#000"/>
<rect x="524" y="497" width="1" height="1" fill="#000"/>
<rect x="519" y="498" width="4" height="1" fill="#ffffff"/>
<rect x="526" y="498" width="4" height="1" fill="#ffffff"/>
<rect x="607" y="491" width="1" height="1" fill="#f0f040"/>
<rect x="608" y="492" width="1" height="1" fill="#f0f040"/>
<rect x="609" y="493" width="1" height="1" fill="#f0f040"/>
<rect x="617" y="491" width="1" height="1" fill="#f0f040"/>
<rect x="616" y="492" width="1" height="1" fill="#f0f040"/>
<rect x="615" y="493" width="1" height="1" fill="#f0f040"/>
<rect x="608" y="499" width="1" height="1" fill="#f0f040"/>
<rect x="607" y="500" width="1" height="1" fill="#f0f040"/>
<rect x="607" y="501" width="1" height="1" fill="#f0f040"/>
<rect x="616" y="499" width="1" height="1" fill="#f0f040"/>
<rect x="617" y="500" width="1" height="1" fill="#f0f040"/>
<rect x="617" y="501" width="1" height="1" fill="#f0f040"/>
<rect x="610" y="492" width="5" height="2" fill="#ffffff"/>
<rect x="610" y="494" width="5" height="4" fill="#f0f040"/>
<rect x="612" y="493" width="1" height="2" fill="#000"/>
<rect x="612" y="497" width="1" height="1" fill="#000"/>
<rect x="607" y="498" width="4" height="1" fill="#ffffff"/>
<rect x="614" y="498" width="4" height="1" fill="#ffffff"/>
<rect x="695" y="491" width="1" height="1" fill="#f0f040"/>
<rect x="696" y="492" width="1" height="1" fill="#f0f040"/>
<rect x="697" y="493" width="1" height="1" fill="#f0f040"/>
<rect x="705" y="491" width="1" height="1" fill="#f0f040"/>
<rect x="704" y="492" width="1" height="1" fill="#f0f040"/>
<rect x="703" y="493" width="1" height="1" fill="#f0f040"/>
<rect x="696" y="499" width="1" height="1" fill="#f0f040"/>
<rect x="695" y="500" width="1" height="1" fill="#f0f040"/>
<rect x="695" y="501" width="1" height="1" fill="#f0f040"/>
<rect x="704" y="499" width="1" height="1" fill="#f0f040"/>
<rect x="705" y="500" width="1" height="1" fill="#f0f040"/>
<rect x="705" y="501" width="1" height="1" fill="#f0f040"/>
<rect x="698" y="492" width="5" height="2" fill="#ffffff"/>
<rect x="698" y="494" width="5" height="4" fill="#f0f040"/>
<rect x="700" y="493" width="1" height="2" fill="#000"/>
<rect x="700" y="497" width="1" height="1" fill="#000"/>
<rect x="695" y="498" width="4" height="1" fill="#ffffff"/>
<rect x="702" y="498" width="4" height="1" fill="#ffffff"/>
<path d="M784 496L787 499.5L793 492.5" fill="none" stroke="#00e020" stroke-width="2.6" shape-rendering="auto"/>
<text x="5" y="524.5" fill="#ffffff" font-size="11" text-anchor="start" font-weight="normal">histo</text>
<rect x="93" y="530" width="85" height="1" fill="#10dc10"/>
<rect x="181" y="530" width="85" height="1" fill="#10dc10"/>
<rect x="269" y="530" width="85" height="1" fill="#10dc10"/>
<rect x="357" y="530" width="85" height="1" fill="#10dc10"/>
<rect x="445" y="530" width="85" height="1" fill="#10dc10"/>
<rect x="533" y="530" width="85" height="1" fill="#10dc10"/>
<rect x="621" y="530" width="85" height="1" fill="#10dc10"/>
<rect x="709" y="530" width="85" height="1" fill="#10dc10"/>
<rect x="115" y="516" width="1" height="14" fill="#10dc10"/>
<rect x="127" y="524" width="1" height="6" fill="#10dc10"/>
<rect x="147" y="524" width="2" height="6" fill="#10dc10"/>
<rect x="470" y="513" width="2" height="17" fill="#10dc10"/>
<rect x="4" y="538" width="97" height="43" rx="3" fill="#40386c" shape-rendering="auto"/>
<rect x="4" y="538" width="96" height="42" rx="3" fill="#9890cc" shape-rendering="auto"/>
<rect x="5" y="539" width="95" height="41" rx="2" fill="#726aa0" shape-rendering="auto"/>
<rect x="6" y="540" width="94" height="12" rx="2" fill="#ffff00" shape-rendering="auto"/>
<text x="6" y="549" fill="#000" font-size="11" text-anchor="start" font-weight="normal">C1</text>
<rect x="71" y="541" width="28" height="10" rx="3" fill="#000" shape-rendering="auto"/>
<text x="74" y="548.5" fill="#ffff00" font-size="9" text-anchor="start" font-weight="normal" letter-spacing="0.1">DC50</text>
<text x="99" y="564" fill="#ffffff" font-size="11" text-anchor="end" font-weight="normal">20.0 mV/div</text>
<text x="99" y="577" fill="#ffffff" font-size="11" text-anchor="end" font-weight="normal">8.00 mV ofst</text>
<rect x="105" y="538" width="97" height="43" rx="3" fill="#8a6a98" shape-rendering="auto"/>
<rect x="105" y="538" width="96" height="42" rx="3" fill="#d4b0dc" shape-rendering="auto"/>
<rect x="106" y="539" width="95" height="41" rx="2" fill="#c59ac9" shape-rendering="auto"/>
<rect x="107" y="541" width="93" height="12" rx="2" fill="#fcc600" shape-rendering="auto"/>
<text x="107" y="550" fill="#000" font-size="11" text-anchor="start" font-weight="normal">F1</text>
<text x="199" y="550" fill="#000" font-size="11" text-anchor="end" font-weight="normal">zoom(C1)</text>
<text x="200" y="564" fill="#ffffff" font-size="11" text-anchor="end" font-weight="normal">15.5 mV/div</text>
<text x="200" y="577" fill="#ffffff" font-size="11" text-anchor="end" font-weight="normal">500 ns/div</text>
<rect x="583" y="538" width="112" height="43" rx="3" fill="#40386c" shape-rendering="auto"/>
<rect x="583" y="538" width="111" height="42" rx="3" fill="#9890cc" shape-rendering="auto"/>
<rect x="584" y="539" width="110" height="41" rx="2" fill="#726aa0" shape-rendering="auto"/>
<rect x="585" y="540" width="108" height="12" rx="2" fill="#ffffff" shape-rendering="auto"/>
<text x="586" y="549" fill="#000" font-size="11" text-anchor="start" font-weight="normal">Развертка</text>
<text x="692" y="549" fill="#000" font-size="11" text-anchor="end" font-weight="normal">0.00 s</text>
<text x="692" y="564" fill="#ffffff" font-size="11" text-anchor="end" font-weight="normal">500 ms/div</text>
<text x="586" y="577" fill="#ffffff" font-size="11" text-anchor="start" font-weight="normal">48.0 MS</text>
<text x="692" y="577" fill="#ffffff" font-size="11" text-anchor="end" font-weight="normal">10 MS/s</text>
<rect x="698" y="538" width="97" height="43" rx="3" fill="#40386c" shape-rendering="auto"/>
<rect x="698" y="538" width="96" height="42" rx="3" fill="#9890cc" shape-rendering="auto"/>
<rect x="699" y="539" width="95" height="41" rx="2" fill="#726aa0" shape-rendering="auto"/>
<rect x="700" y="540" width="94" height="12" rx="2" fill="#ffffff" shape-rendering="auto"/>
<text x="701" y="549" fill="#000" font-size="11" text-anchor="start" font-weight="normal" letter-spacing="0.3">Синхронизация</text>
<rect x="777" y="541" width="16" height="10" rx="3" fill="#000" shape-rendering="auto"/>
<text x="785" y="549" fill="#fff" font-size="10" text-anchor="middle" font-weight="normal">C1</text>
<text x="701" y="564" fill="#ffffff" font-size="11" text-anchor="start" font-weight="normal">Стоп</text>
<text x="792" y="564" fill="#ffffff" font-size="11" text-anchor="end" font-weight="normal">-5.6 mV</text>
<text x="701" y="577" fill="#ffffff" font-size="11" text-anchor="start" font-weight="normal">Фронт</text>
<text x="792" y="577" fill="#ffffff" font-size="11" text-anchor="end" font-weight="normal">Положит.</text>
<text x="10" y="595" fill="#1414ff" font-size="15" text-anchor="start" font-weight="bold" letter-spacing="0">LeCroy</text>
<rect x="6" y="597" width="48" height="2" fill="#1414ff"/>
<text x="672" y="596" fill="#ffffff" font-size="12" text-anchor="start" font-weight="normal">08.09.2005 10:10:36</text>
</svg></body></html>
